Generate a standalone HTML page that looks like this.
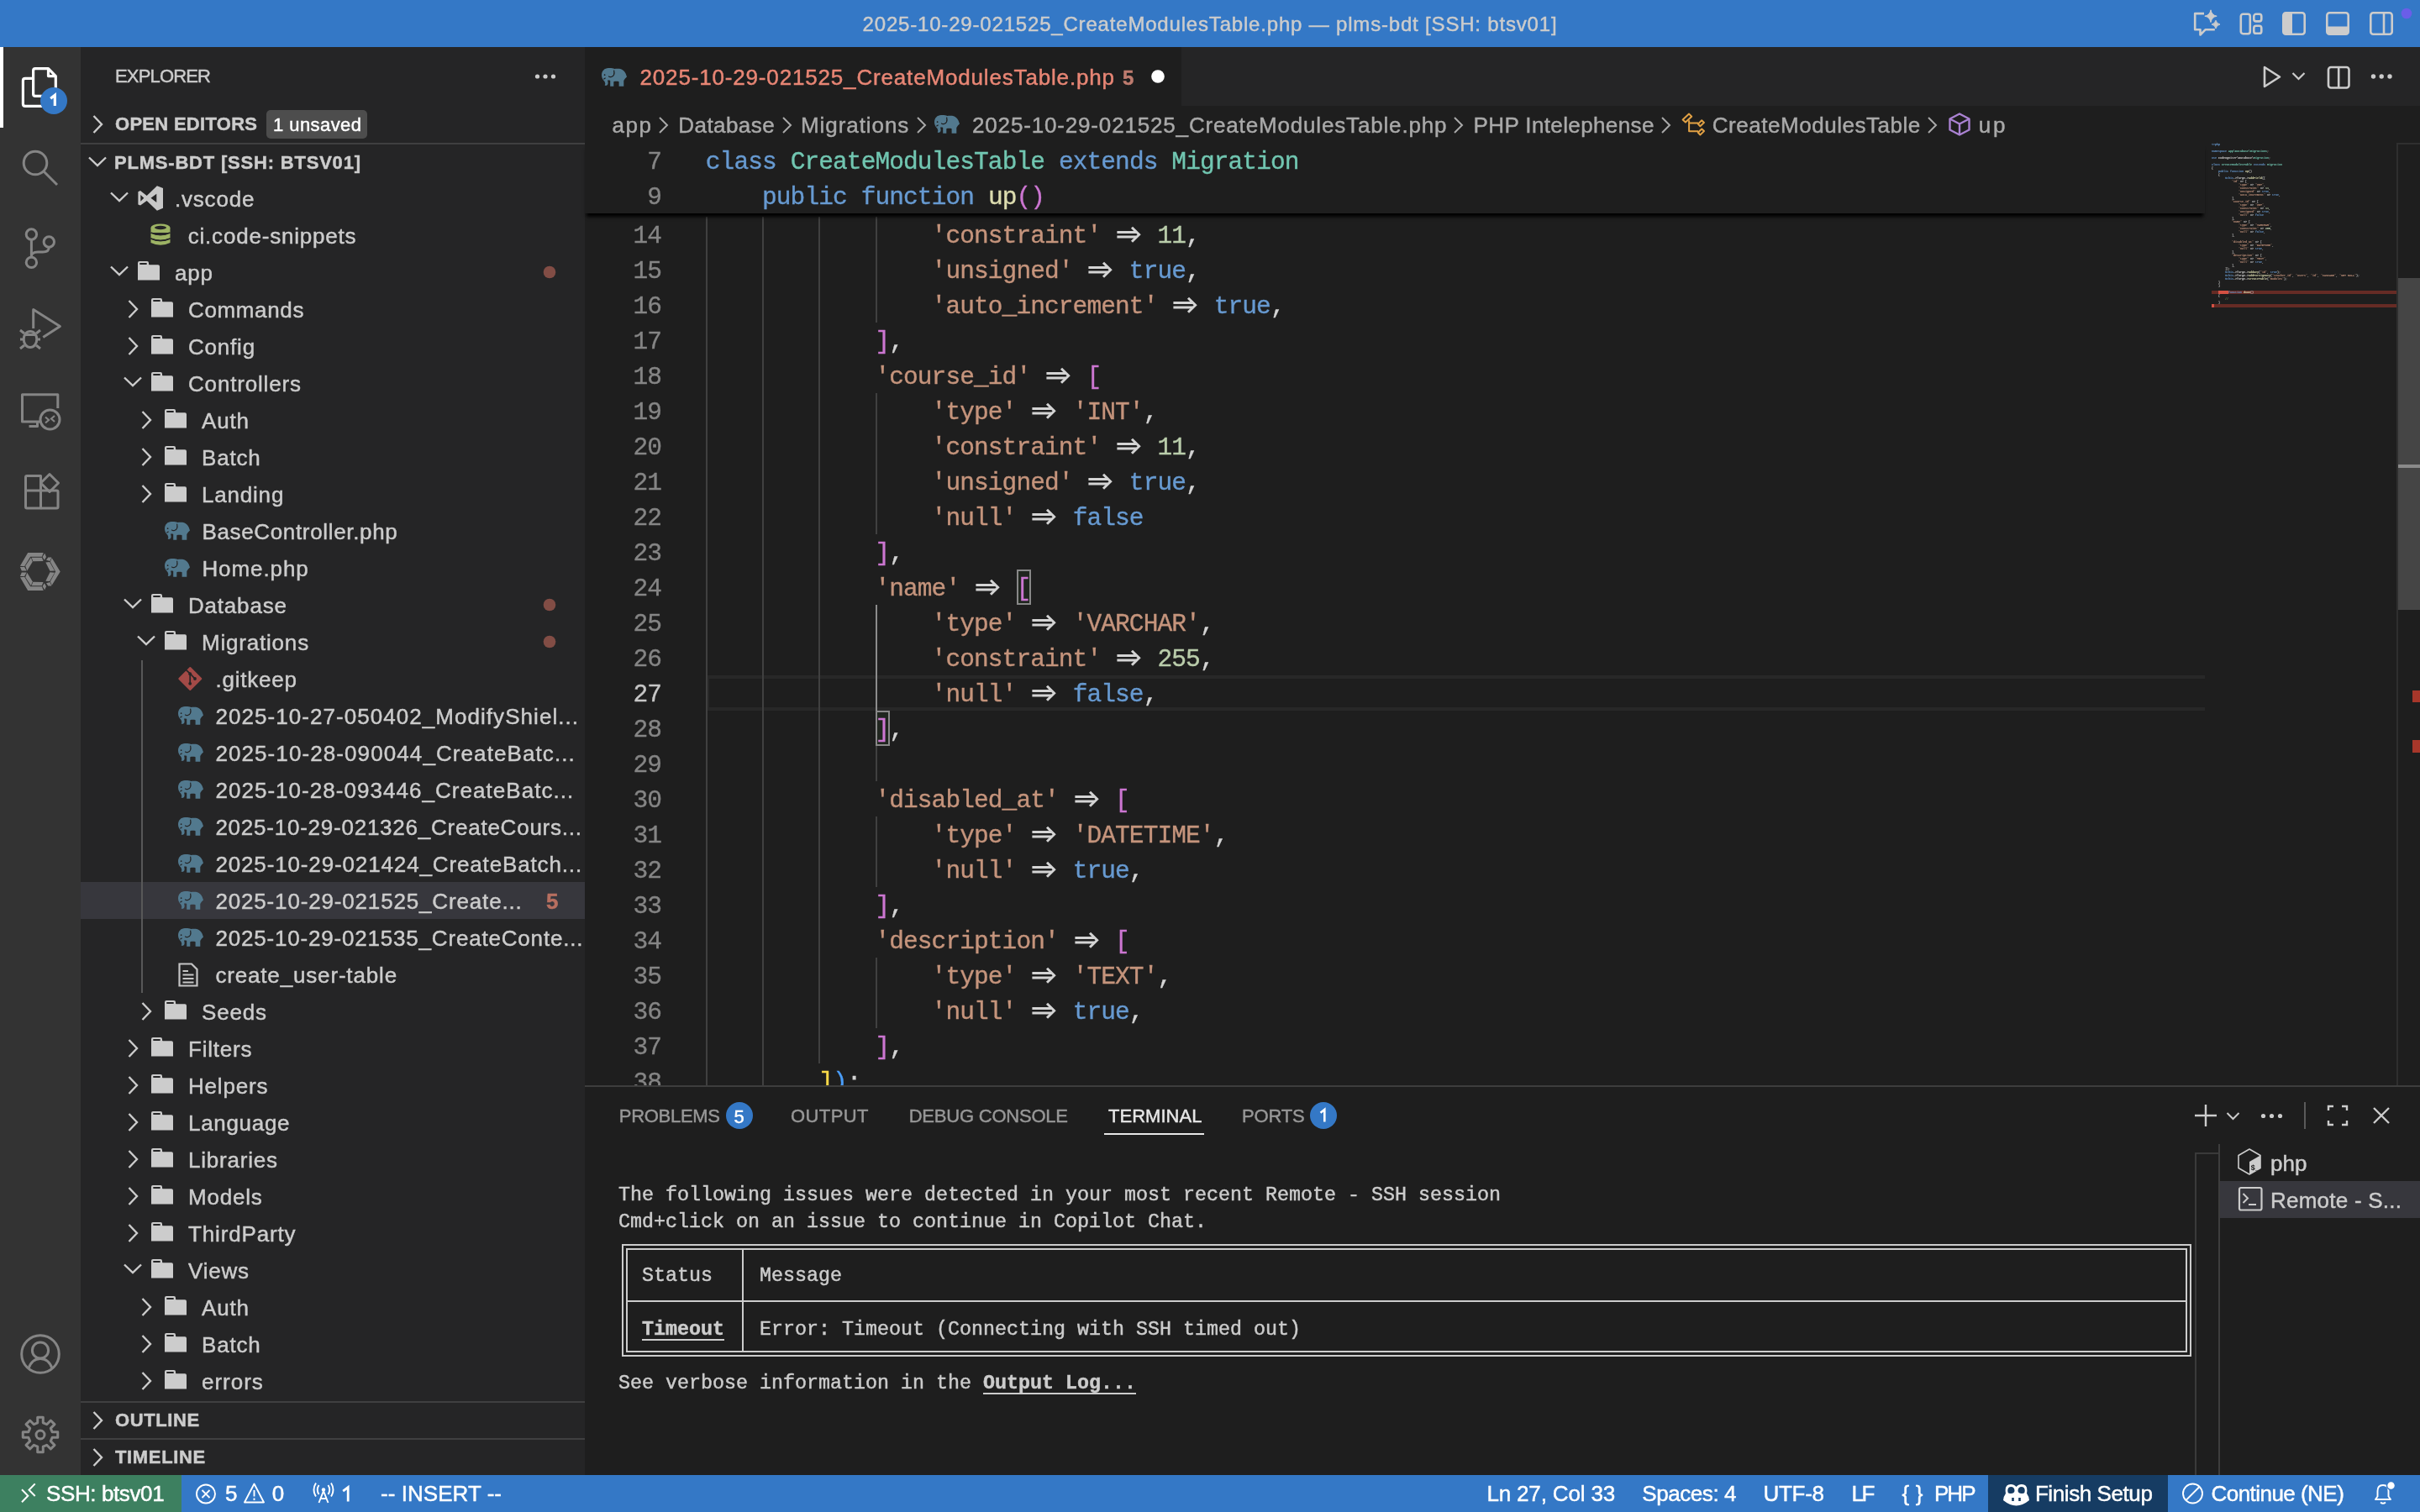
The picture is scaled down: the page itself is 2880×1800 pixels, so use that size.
<!DOCTYPE html><html><head><meta charset="utf-8"><style>html,body{margin:0;padding:0;width:2880px;height:1800px;overflow:hidden;background:#1e1e1e}svg{overflow:visible}</style></head><body><div style="position:absolute;left:0;top:0;width:2880px;height:1800px;overflow:hidden;will-change:transform"><div style="position:absolute;left:0px;top:0px;width:2880px;height:56px;background:#3478c6;"></div>
<div style="position:absolute;left:0px;top:56px;width:96px;height:1700px;background:#333333;"></div>
<div style="position:absolute;left:96px;top:56px;width:600px;height:1700px;background:#252526;"></div>
<div style="position:absolute;left:696px;top:56px;width:2184px;height:1700px;background:#1e1e1e;"></div>
<div style="position:absolute;left:1406px;top:56px;width:1474px;height:70px;background:#252526;"></div>
<div style="position:absolute;left:0px;top:1756px;width:2880px;height:44px;background:#3478c6;"></div>
<div id="t1" style="position:absolute;left:1440px;top:16.60px;font-family:'Liberation Sans', sans-serif;font-size:24px;line-height:1;font-weight:400;color:#cccccc;white-space:pre;-webkit-text-stroke:0.45px #cccccc;letter-spacing:0.816px;transform:translateX(-50%);">2025-10-29-021525_CreateModulesTable.php — plms-bdt [SSH: btsv01]</div>
<svg style="position:absolute;left:2608px;top:8px;" width="40" height="40" viewBox="0 0 40 40">
<path d="M15 8.1 H4.2 V27.3 H10.5 V33.5 L16.5 27.3 H27.8" fill="none" stroke="#cccccc" stroke-width="2.6" stroke-linejoin="round"/>
<path d="M23 3.8 Q24.2 10.2 30.2 11.2 Q24.2 12.2 23 18.6 Q21.8 12.2 15.8 11.2 Q21.8 10.2 23 3.8Z" fill="#cccccc" stroke="#cccccc" stroke-width="1"/>
<path d="M29 16.2 Q29.8 20.2 34 21 Q29.8 21.8 29 26 Q28.2 21.8 24 21 Q28.2 20.2 29 16.2Z" fill="#cccccc" stroke="#cccccc" stroke-width="1"/>
</svg>
<svg style="position:absolute;left:2664px;top:14px;" width="32" height="30" viewBox="0 0 32 30">
<rect x="2.8" y="2.8" width="11" height="23.4" rx="2.6" fill="none" stroke="#cccccc" stroke-width="2.6" stroke-linejoin="round"/>
<rect x="18.3" y="2.8" width="9" height="8.6" rx="2.6" fill="none" stroke="#cccccc" stroke-width="2.6" stroke-linejoin="round"/>
<rect x="18.3" y="16.8" width="9" height="9" rx="2.6" fill="none" stroke="#cccccc" stroke-width="2.6" stroke-linejoin="round"/>
</svg>
<svg style="position:absolute;left:2714px;top:12px;" width="32" height="32" viewBox="0 0 32 32">
<rect x="3.3" y="3.3" width="25.4" height="25.4" rx="3" fill="none" stroke="#cccccc" stroke-width="2.6" stroke-linejoin="round"/>
<path d="M3.3 6 Q3.3 3.3 6 3.3 H14 V28.7 H6 Q3.3 28.7 3.3 26 Z" fill="#cccccc"/>
</svg>
<svg style="position:absolute;left:2766px;top:12px;" width="32" height="32" viewBox="0 0 32 32">
<rect x="3.3" y="3.3" width="25.4" height="25.4" rx="3" fill="none" stroke="#cccccc" stroke-width="2.6" stroke-linejoin="round"/>
<path d="M3.3 19.5 H28.7 V26 Q28.7 28.7 26 28.7 H6 Q3.3 28.7 3.3 26 Z" fill="#cccccc"/>
</svg>
<svg style="position:absolute;left:2818px;top:12px;" width="32" height="32" viewBox="0 0 32 32">
<rect x="3.3" y="3.3" width="25.4" height="25.4" rx="3" fill="none" stroke="#cccccc" stroke-width="2.6" stroke-linejoin="round"/>
<path d="M19 3.3 V28.7" fill="none" stroke="#cccccc" stroke-width="2.6" stroke-linejoin="round"/>
</svg>
<svg style="position:absolute;left:2856px;top:8px;" width="16" height="16" viewBox="0 0 16 16"><circle cx="8" cy="8" r="6.3" fill="#6a5ee8"/></svg>
<div style="position:absolute;left:0px;top:56px;width:4px;height:96px;background:#ffffff;"></div>
<svg style="position:absolute;left:20px;top:76px;" width="56" height="64" viewBox="0 0 56 64">
<path d="M30 38.4 H22 Q19.6 38.4 19.6 36 V8 Q19.6 5.6 22 5.6 H37.5 L46.3 14.6 V40" fill="none" stroke="#ffffff" stroke-width="3.2" stroke-linejoin="round"/>
<path d="M37.5 5.6 V14.6 H46.3" fill="none" stroke="#ffffff" stroke-width="3.2" stroke-linejoin="round"/>
<path d="M19.6 17.4 H10 Q7.4 17.4 7.4 20 V47.7 Q7.4 50.3 10 50.3 H30" fill="none" stroke="#ffffff" stroke-width="3.2" stroke-linejoin="round"/>
<circle cx="44" cy="44" r="16" fill="#3478c6"/>
<path d="M40.2 41.2 L45.3 37.2 V50" fill="none" stroke="#ffffff" stroke-width="3.2" stroke-linejoin="miter"/>
</svg>
<svg style="position:absolute;left:20px;top:172px;" width="56" height="56" viewBox="0 0 56 56">
<circle cx="22" cy="22" r="13.8" fill="none" stroke="#858585" stroke-width="3" stroke-linecap="butt" stroke-linejoin="round"/>
<path d="M32 32 L48 48" fill="none" stroke="#858585" stroke-width="3" stroke-linecap="butt" stroke-linejoin="round"/>
</svg>
<svg style="position:absolute;left:20px;top:264px;" width="56" height="64" viewBox="0 0 56 64">
<circle cx="17.4" cy="15" r="6.2" fill="none" stroke="#858585" stroke-width="3" stroke-linecap="butt" stroke-linejoin="round"/>
<circle cx="17.4" cy="48.4" r="6.2" fill="none" stroke="#858585" stroke-width="3" stroke-linecap="butt" stroke-linejoin="round"/>
<circle cx="38.3" cy="24" r="6.2" fill="none" stroke="#858585" stroke-width="3" stroke-linecap="butt" stroke-linejoin="round"/>
<path d="M17.4 21.2 V42.2" fill="none" stroke="#858585" stroke-width="3" stroke-linecap="butt" stroke-linejoin="round"/>
<path d="M38.3 30.2 Q38.3 36 31 36 H25 Q17.4 36 17.4 41" fill="none" stroke="#858585" stroke-width="3" stroke-linecap="butt" stroke-linejoin="round"/>
</svg>
<svg style="position:absolute;left:16px;top:360px;" width="64" height="64" viewBox="0 0 64 64">
<path d="M23.7 31 V8.5 L55.4 28.4 L35.3 41.5" fill="none" stroke="#858585" stroke-width="3" stroke-linecap="butt" stroke-linejoin="round"/>
<ellipse cx="20" cy="44" rx="7.8" ry="9.5" fill="none" stroke="#858585" stroke-width="3" stroke-linecap="butt" stroke-linejoin="round"/>
<path d="M13 38.5 H27" fill="none" stroke="#858585" stroke-width="3" stroke-linecap="butt" stroke-linejoin="round"/>
<path d="M8 33 L13 37 M32 33 L27 37 M8 44 H12.2 M27.8 44 H32 M8 55 L13 51 M32 55 L27 51" fill="none" stroke="#858585" stroke-width="3" stroke-linecap="butt" stroke-linejoin="round"/>
</svg>
<svg style="position:absolute;left:16px;top:456px;" width="64" height="64" viewBox="0 0 64 64">
<path d="M31 46 H10.5 V13.7 H52.8 V30" fill="none" stroke="#858585" stroke-width="3" stroke-linecap="butt" stroke-linejoin="round"/>
<path d="M18.5 51.5 H28.5 V46" fill="none" stroke="#858585" stroke-width="3" stroke-linecap="butt" stroke-linejoin="round"/>
<circle cx="43.5" cy="43.5" r="11.5" fill="none" stroke="#858585" stroke-width="3" stroke-linecap="butt" stroke-linejoin="round"/>
<path d="M38 40.5 L42 44 L38 47.5 M49 39 L45 42.5 L49 46" fill="none" stroke="#858585" stroke-width="2.2"/>
</svg>
<svg style="position:absolute;left:20px;top:556px;" width="60" height="60" viewBox="0 0 60 60">
<path d="M10.5 28 H28.5 V10.5 H12 Q10.5 10.5 10.5 12 Z" fill="none" stroke="#858585" stroke-width="3" stroke-linecap="butt" stroke-linejoin="round"/>
<path d="M10.5 28 V47.5 Q10.5 49 12 49 H28.5 V28" fill="none" stroke="#858585" stroke-width="3" stroke-linecap="butt" stroke-linejoin="round"/>
<path d="M28.5 28 H47.5 Q49 28 49 29.5 V47.5 Q49 49 47.5 49 H28.5" fill="none" stroke="#858585" stroke-width="3" stroke-linecap="butt" stroke-linejoin="round"/>
<path d="M28.5 19 L39 8.5 L49.5 19 L39 29.5 Z" fill="none" stroke="#858585" stroke-width="3" stroke-linecap="butt" stroke-linejoin="round"/>
</svg>
<svg style="position:absolute;left:18px;top:652px;" width="60" height="56" viewBox="0 0 1620 1512"><g fill="#858585"><path d="M160 590 L410 160 L910 160 L860 290 L490 290 L300 600Z"/><path d="M160 950 L410 1380 L910 1380 L860 1250 L490 1250 L300 940Z"/><path d="M530 320 L860 320 L905 430 L575 440Z"/><path d="M530 1220 L860 1220 L905 1110 L575 1100Z"/><path d="M330 590 L510 320 L560 450 L385 740Z"/><path d="M330 950 L510 1220 L560 1090 L385 800Z"/><path d="M160 620 L300 620 L370 745 L210 745Z"/><path d="M160 920 L300 920 L370 795 L210 795Z"/><path d="M880 300 L950 180 L1000 300 L940 400Z"/><path d="M880 1240 L950 1360 L1000 1240 L940 1140Z"/><path d="M1000 400 L1060 310 L1170 310 L1120 430Z"/><path d="M1000 1140 L1060 1230 L1170 1230 L1120 1110Z"/><path d="M980 470 L1110 460 L1270 740 L1120 750Z"/><path d="M980 1070 L1110 1080 L1270 800 L1120 790Z"/><path d="M1180 330 L1450 770 L1180 1210 L1130 1090 L1300 770 L1130 450Z"/></g></svg>
<svg style="position:absolute;left:16px;top:1580px;" width="64" height="64" viewBox="0 0 64 64">
<circle cx="32" cy="32" r="22.3" fill="none" stroke="#858585" stroke-width="3" stroke-linecap="butt" stroke-linejoin="round"/>
<circle cx="32" cy="27.5" r="9.6" fill="none" stroke="#858585" stroke-width="3" stroke-linecap="butt" stroke-linejoin="round"/>
<path d="M18 49 Q22 37.5 32 37.5 Q42 37.5 46 49" fill="none" stroke="#858585" stroke-width="3" stroke-linecap="butt" stroke-linejoin="round"/>
</svg>
<svg style="position:absolute;left:16px;top:1676px;" width="64" height="64" viewBox="0 0 64 64">
<path d="M28.74 17.87 L28.71 11.26 L35.29 11.26 L35.26 17.87 L39.68 19.70 L44.34 15.01 L48.99 19.66 L44.30 24.32 L46.13 28.74 L52.74 28.71 L52.74 35.29 L46.13 35.26 L44.30 39.68 L48.99 44.34 L44.34 48.99 L39.68 44.30 L35.26 46.13 L35.29 52.74 L28.71 52.74 L28.74 46.13 L24.32 44.30 L19.66 48.99 L15.01 44.34 L19.70 39.68 L17.87 35.26 L11.26 35.29 L11.26 28.71 L17.87 28.74 L19.70 24.32 L15.01 19.66 L19.66 15.01 L24.32 19.70Z" fill="none" stroke="#858585" stroke-width="3" stroke-linecap="butt" stroke-linejoin="round"/>
<circle cx="32" cy="32" r="5" fill="none" stroke="#858585" stroke-width="3" stroke-linecap="butt" stroke-linejoin="round"/>
</svg>
<div id="t2" style="position:absolute;left:137px;top:80.30px;font-family:'Liberation Sans', sans-serif;font-size:22px;line-height:1;font-weight:400;color:#cccccc;white-space:pre;-webkit-text-stroke:0.45px #cccccc;letter-spacing:-0.833px;">EXPLORER</div>
<svg style="position:absolute;left:632px;top:84px;" width="32" height="16" viewBox="0 0 32 16"><circle cx="7.5" cy="7" r="2.6" fill="#cccccc"/><circle cx="17" cy="7" r="2.6" fill="#cccccc"/><circle cx="26.5" cy="7" r="2.6" fill="#cccccc"/></svg>
<svg style="position:absolute;left:109px;top:136px;" width="16" height="24" viewBox="0 0 16 24"><path d="M2.5 2 L12 12 L2.5 22" fill="none" stroke="#cccccc" stroke-width="2.4"/></svg>
<div id="t3" style="position:absolute;left:137px;top:137.30px;font-family:'Liberation Sans', sans-serif;font-size:22px;line-height:1;font-weight:700;color:#cccccc;white-space:pre;-webkit-text-stroke:0.45px #cccccc;letter-spacing:0.286px;">OPEN EDITORS</div>
<div style="position:absolute;left:317px;top:131px;width:120px;height:34px;background:#4d4d4d;border-radius:5px;"></div>
<div id="t4" style="position:absolute;left:325px;top:138.30px;font-family:'Liberation Sans', sans-serif;font-size:22px;line-height:1;font-weight:400;color:#ffffff;white-space:pre;-webkit-text-stroke:0.45px #ffffff;letter-spacing:0.434px;">1 unsaved</div>
<div style="position:absolute;left:96px;top:170px;width:600px;height:2px;background:#3f3f40;"></div>
<svg style="position:absolute;left:104px;top:185px;" width="24" height="16" viewBox="0 0 24 16"><path d="M2 2.5 L12 12 L22 2.5" fill="none" stroke="#cccccc" stroke-width="2.4"/></svg>
<div id="t5" style="position:absolute;left:136px;top:182.80px;font-family:'Liberation Sans', sans-serif;font-size:22px;line-height:1;font-weight:700;color:#cccccc;white-space:pre;-webkit-text-stroke:0.45px #cccccc;letter-spacing:0.798px;">PLMS-BDT [SSH: BTSV01]</div>
<div style="position:absolute;left:96px;top:1050px;width:600px;height:44px;background:#37373d;"></div>
<div style="position:absolute;left:168px;top:786px;width:2px;height:396px;background:#585858;"></div>
<svg style="position:absolute;left:129.7px;top:227px;" width="24" height="16" viewBox="0 0 24 16"><path d="M2 2.5 L12 12 L22 2.5" fill="none" stroke="#cccccc" stroke-width="2.4"/></svg>
<svg style="position:absolute;left:163.7px;top:221px;" width="31" height="31" viewBox="0 0 31 31"><path d="M0.4 7.2 L3 6.1 L10.7 11.9 L22.9 0.3 L30 2.9 V26.7 L22.9 29.7 L10.7 18 L3 23.6 L0.4 22.5 Z M3.3 10.9 L7.3 14.8 L3.3 18.8 Z M22.3 9.8 L15.5 14.8 L22.3 20.1 Z" fill="#c8c8c8" fill-rule="evenodd"/></svg>
<div id="t6" style="position:absolute;left:208px;top:223.90px;font-family:'Liberation Sans', sans-serif;font-size:26px;line-height:1;font-weight:400;color:#cccccc;white-space:pre;-webkit-text-stroke:0.45px #cccccc;letter-spacing:0.8px;">.vscode</div>
<svg style="position:absolute;left:179.2px;top:266px;" width="26" height="28" viewBox="0 0 26 28"><g fill="#9db364">
<ellipse cx="12" cy="5" rx="11.5" ry="4.6"/><rect x="0.5" y="5" width="23" height="6"/>
<path d="M0.5 11.5 Q12 17 23.5 11.5 V17.5 Q12 22 0.5 17.5Z"/>
<path d="M0.5 18.5 Q12 24 23.5 18.5 V23 Q12 28.5 0.5 23Z"/>
</g><ellipse cx="12" cy="5" rx="7" ry="2.2" fill="#252526"/>
<path d="M0.5 11 Q12 16 23.5 11" fill="none" stroke="#252526" stroke-width="1.6"/>
<path d="M0.5 18 Q12 23 23.5 18" fill="none" stroke="#252526" stroke-width="1.6"/></svg>
<div id="t7" style="position:absolute;left:223.7px;top:267.90px;font-family:'Liberation Sans', sans-serif;font-size:26px;line-height:1;font-weight:400;color:#cccccc;white-space:pre;-webkit-text-stroke:0.45px #cccccc;letter-spacing:0.8px;">ci.code-snippets</div>
<svg style="position:absolute;left:129.7px;top:315px;" width="24" height="16" viewBox="0 0 24 16"><path d="M2 2.5 L12 12 L22 2.5" fill="none" stroke="#cccccc" stroke-width="2.4"/></svg>
<svg style="position:absolute;left:164.0px;top:310.6px;" width="27" height="23" viewBox="0 0 27 23"><path d="M0 2 Q0 0 2 0 H11 Q13 0 13 2 V3.4 Q13.4 4.3 14.6 4.3 H24 Q26 4.3 26 6.3 V22.4 H0 Z" fill="#cccccc"/><rect x="2.1" y="2.1" width="8.8" height="1.9" rx="0.9" fill="#252526"/></svg>
<div id="t8" style="position:absolute;left:208px;top:311.90px;font-family:'Liberation Sans', sans-serif;font-size:26px;line-height:1;font-weight:400;color:#cccccc;white-space:pre;-webkit-text-stroke:0.45px #cccccc;letter-spacing:0.8px;">app</div>
<svg style="position:absolute;left:646px;top:316px;" width="16" height="16" viewBox="0 0 16 16"><circle cx="8" cy="8" r="7.3" fill="#824d45"/></svg>
<svg style="position:absolute;left:150.7px;top:356px;" width="16" height="24" viewBox="0 0 16 24"><path d="M2.5 2 L12 12 L2.5 22" fill="none" stroke="#cccccc" stroke-width="2.4"/></svg>
<svg style="position:absolute;left:180.0px;top:354.6px;" width="27" height="23" viewBox="0 0 27 23"><path d="M0 2 Q0 0 2 0 H11 Q13 0 13 2 V3.4 Q13.4 4.3 14.6 4.3 H24 Q26 4.3 26 6.3 V22.4 H0 Z" fill="#cccccc"/><rect x="2.1" y="2.1" width="8.8" height="1.9" rx="0.9" fill="#252526"/></svg>
<div id="t9" style="position:absolute;left:224px;top:355.90px;font-family:'Liberation Sans', sans-serif;font-size:26px;line-height:1;font-weight:400;color:#cccccc;white-space:pre;-webkit-text-stroke:0.45px #cccccc;letter-spacing:0.638px;">Commands</div>
<svg style="position:absolute;left:150.7px;top:400px;" width="16" height="24" viewBox="0 0 16 24"><path d="M2.5 2 L12 12 L2.5 22" fill="none" stroke="#cccccc" stroke-width="2.4"/></svg>
<svg style="position:absolute;left:180.0px;top:398.6px;" width="27" height="23" viewBox="0 0 27 23"><path d="M0 2 Q0 0 2 0 H11 Q13 0 13 2 V3.4 Q13.4 4.3 14.6 4.3 H24 Q26 4.3 26 6.3 V22.4 H0 Z" fill="#cccccc"/><rect x="2.1" y="2.1" width="8.8" height="1.9" rx="0.9" fill="#252526"/></svg>
<div id="t10" style="position:absolute;left:224px;top:399.90px;font-family:'Liberation Sans', sans-serif;font-size:26px;line-height:1;font-weight:400;color:#cccccc;white-space:pre;-webkit-text-stroke:0.45px #cccccc;letter-spacing:0.8px;">Config</div>
<svg style="position:absolute;left:145.7px;top:447px;" width="24" height="16" viewBox="0 0 24 16"><path d="M2 2.5 L12 12 L22 2.5" fill="none" stroke="#cccccc" stroke-width="2.4"/></svg>
<svg style="position:absolute;left:180.0px;top:442.6px;" width="27" height="23" viewBox="0 0 27 23"><path d="M0 2 Q0 0 2 0 H11 Q13 0 13 2 V3.4 Q13.4 4.3 14.6 4.3 H24 Q26 4.3 26 6.3 V22.4 H0 Z" fill="#cccccc"/><rect x="2.1" y="2.1" width="8.8" height="1.9" rx="0.9" fill="#252526"/></svg>
<div id="t11" style="position:absolute;left:224px;top:443.90px;font-family:'Liberation Sans', sans-serif;font-size:26px;line-height:1;font-weight:400;color:#cccccc;white-space:pre;-webkit-text-stroke:0.45px #cccccc;letter-spacing:0.828px;">Controllers</div>
<svg style="position:absolute;left:166.7px;top:488px;" width="16" height="24" viewBox="0 0 16 24"><path d="M2.5 2 L12 12 L2.5 22" fill="none" stroke="#cccccc" stroke-width="2.4"/></svg>
<svg style="position:absolute;left:196.0px;top:486.6px;" width="27" height="23" viewBox="0 0 27 23"><path d="M0 2 Q0 0 2 0 H11 Q13 0 13 2 V3.4 Q13.4 4.3 14.6 4.3 H24 Q26 4.3 26 6.3 V22.4 H0 Z" fill="#cccccc"/><rect x="2.1" y="2.1" width="8.8" height="1.9" rx="0.9" fill="#252526"/></svg>
<div id="t12" style="position:absolute;left:240px;top:487.90px;font-family:'Liberation Sans', sans-serif;font-size:26px;line-height:1;font-weight:400;color:#cccccc;white-space:pre;-webkit-text-stroke:0.45px #cccccc;letter-spacing:0.8px;">Auth</div>
<svg style="position:absolute;left:166.7px;top:532px;" width="16" height="24" viewBox="0 0 16 24"><path d="M2.5 2 L12 12 L2.5 22" fill="none" stroke="#cccccc" stroke-width="2.4"/></svg>
<svg style="position:absolute;left:196.0px;top:530.6px;" width="27" height="23" viewBox="0 0 27 23"><path d="M0 2 Q0 0 2 0 H11 Q13 0 13 2 V3.4 Q13.4 4.3 14.6 4.3 H24 Q26 4.3 26 6.3 V22.4 H0 Z" fill="#cccccc"/><rect x="2.1" y="2.1" width="8.8" height="1.9" rx="0.9" fill="#252526"/></svg>
<div id="t13" style="position:absolute;left:240px;top:531.90px;font-family:'Liberation Sans', sans-serif;font-size:26px;line-height:1;font-weight:400;color:#cccccc;white-space:pre;-webkit-text-stroke:0.45px #cccccc;letter-spacing:0.8px;">Batch</div>
<svg style="position:absolute;left:166.7px;top:576px;" width="16" height="24" viewBox="0 0 16 24"><path d="M2.5 2 L12 12 L2.5 22" fill="none" stroke="#cccccc" stroke-width="2.4"/></svg>
<svg style="position:absolute;left:196.0px;top:574.6px;" width="27" height="23" viewBox="0 0 27 23"><path d="M0 2 Q0 0 2 0 H11 Q13 0 13 2 V3.4 Q13.4 4.3 14.6 4.3 H24 Q26 4.3 26 6.3 V22.4 H0 Z" fill="#cccccc"/><rect x="2.1" y="2.1" width="8.8" height="1.9" rx="0.9" fill="#252526"/></svg>
<div id="t14" style="position:absolute;left:240px;top:575.90px;font-family:'Liberation Sans', sans-serif;font-size:26px;line-height:1;font-weight:400;color:#cccccc;white-space:pre;-webkit-text-stroke:0.45px #cccccc;letter-spacing:0.8px;">Landing</div>
<svg style="position:absolute;left:195.7px;top:621px;" width="30" height="22" viewBox="0 0 30 22"><g transform="scale(1.0000,1.0000)">
<path d="M8 0 C3.5 0 0 3.5 0 8.5 C0 11.5 1.5 14.5 3.5 16 L4.3 18.6 C4.3 19.4 4.0 19.8 3.6 20.2 C4.5 21.4 6.3 21.0 7.1 19.8 C7.9 18.5 7.7 16.5 7 14.8 C8 14.3 9.2 14.4 10.2 14.9 L10.2 21.7 L14.3 21.7 L14.3 16.2 C16 15.6 19 15.6 20.6 16.2 L20.6 21.7 L26.3 21.7 L26.3 15 C27.3 13.2 28.5 11.8 30 10.6 C29.2 7 27.5 3 23 1.2 C20.5 0.4 17.5 0.6 15.2 1 C13.5 0 10.5 -0.2 8 0 Z" fill="#52798e"/>
<path d="M14.6 2.6 C15.4 6 14.6 9.6 11.6 10.5 C10.1 11 8.9 10.5 8.3 9.6" fill="none" stroke="#252526" stroke-width="1.2"/>
<circle cx="3.6" cy="8.2" r="0.85" fill="#252526"/>
<path d="M2.4 13.2 L4.6 11.8" stroke="#252526" stroke-width="1.2"/>
</g></svg>
<div id="t15" style="position:absolute;left:240.4px;top:619.90px;font-family:'Liberation Sans', sans-serif;font-size:26px;line-height:1;font-weight:400;color:#cccccc;white-space:pre;-webkit-text-stroke:0.45px #cccccc;letter-spacing:0.662px;">BaseController.php</div>
<svg style="position:absolute;left:195.7px;top:665px;" width="30" height="22" viewBox="0 0 30 22"><g transform="scale(1.0000,1.0000)">
<path d="M8 0 C3.5 0 0 3.5 0 8.5 C0 11.5 1.5 14.5 3.5 16 L4.3 18.6 C4.3 19.4 4.0 19.8 3.6 20.2 C4.5 21.4 6.3 21.0 7.1 19.8 C7.9 18.5 7.7 16.5 7 14.8 C8 14.3 9.2 14.4 10.2 14.9 L10.2 21.7 L14.3 21.7 L14.3 16.2 C16 15.6 19 15.6 20.6 16.2 L20.6 21.7 L26.3 21.7 L26.3 15 C27.3 13.2 28.5 11.8 30 10.6 C29.2 7 27.5 3 23 1.2 C20.5 0.4 17.5 0.6 15.2 1 C13.5 0 10.5 -0.2 8 0 Z" fill="#52798e"/>
<path d="M14.6 2.6 C15.4 6 14.6 9.6 11.6 10.5 C10.1 11 8.9 10.5 8.3 9.6" fill="none" stroke="#252526" stroke-width="1.2"/>
<circle cx="3.6" cy="8.2" r="0.85" fill="#252526"/>
<path d="M2.4 13.2 L4.6 11.8" stroke="#252526" stroke-width="1.2"/>
</g></svg>
<div id="t16" style="position:absolute;left:240.4px;top:663.90px;font-family:'Liberation Sans', sans-serif;font-size:26px;line-height:1;font-weight:400;color:#cccccc;white-space:pre;-webkit-text-stroke:0.45px #cccccc;letter-spacing:0.919px;">Home.php</div>
<svg style="position:absolute;left:145.7px;top:711px;" width="24" height="16" viewBox="0 0 24 16"><path d="M2 2.5 L12 12 L22 2.5" fill="none" stroke="#cccccc" stroke-width="2.4"/></svg>
<svg style="position:absolute;left:180.0px;top:706.6px;" width="27" height="23" viewBox="0 0 27 23"><path d="M0 2 Q0 0 2 0 H11 Q13 0 13 2 V3.4 Q13.4 4.3 14.6 4.3 H24 Q26 4.3 26 6.3 V22.4 H0 Z" fill="#cccccc"/><rect x="2.1" y="2.1" width="8.8" height="1.9" rx="0.9" fill="#252526"/></svg>
<div id="t17" style="position:absolute;left:224px;top:707.90px;font-family:'Liberation Sans', sans-serif;font-size:26px;line-height:1;font-weight:400;color:#cccccc;white-space:pre;-webkit-text-stroke:0.45px #cccccc;letter-spacing:0.8px;">Database</div>
<svg style="position:absolute;left:646px;top:712px;" width="16" height="16" viewBox="0 0 16 16"><circle cx="8" cy="8" r="7.3" fill="#824d45"/></svg>
<svg style="position:absolute;left:161.7px;top:755px;" width="24" height="16" viewBox="0 0 24 16"><path d="M2 2.5 L12 12 L22 2.5" fill="none" stroke="#cccccc" stroke-width="2.4"/></svg>
<svg style="position:absolute;left:196.0px;top:750.6px;" width="27" height="23" viewBox="0 0 27 23"><path d="M0 2 Q0 0 2 0 H11 Q13 0 13 2 V3.4 Q13.4 4.3 14.6 4.3 H24 Q26 4.3 26 6.3 V22.4 H0 Z" fill="#cccccc"/><rect x="2.1" y="2.1" width="8.8" height="1.9" rx="0.9" fill="#252526"/></svg>
<div id="t18" style="position:absolute;left:240px;top:751.90px;font-family:'Liberation Sans', sans-serif;font-size:26px;line-height:1;font-weight:400;color:#cccccc;white-space:pre;-webkit-text-stroke:0.45px #cccccc;letter-spacing:0.8px;">Migrations</div>
<svg style="position:absolute;left:646px;top:756px;" width="16" height="16" viewBox="0 0 16 16"><circle cx="8" cy="8" r="7.3" fill="#824d45"/></svg>
<svg style="position:absolute;left:209.7px;top:792px;" width="34" height="32" viewBox="0 0 34 32"><path d="M16.3 3 L29.3 16 L16.3 29 L3.3 16 Z" fill="#a34a47" stroke="#a34a47" stroke-width="2" stroke-linejoin="round"/>
<path d="M11 5.2 L16.2 9.9 V21.8 M16.2 9.9 L22 16" fill="none" stroke="#252526" stroke-width="1.7"/>
<circle cx="16.2" cy="10.2" r="1.9" fill="#252526"/><circle cx="16.2" cy="21.8" r="1.9" fill="#252526"/><circle cx="22" cy="16" r="1.9" fill="#252526"/></svg>
<div id="t19" style="position:absolute;left:256.4px;top:795.90px;font-family:'Liberation Sans', sans-serif;font-size:26px;line-height:1;font-weight:400;color:#cccccc;white-space:pre;-webkit-text-stroke:0.45px #cccccc;letter-spacing:0.8px;">.gitkeep</div>
<svg style="position:absolute;left:211.7px;top:841px;" width="30" height="22" viewBox="0 0 30 22"><g transform="scale(1.0000,1.0000)">
<path d="M8 0 C3.5 0 0 3.5 0 8.5 C0 11.5 1.5 14.5 3.5 16 L4.3 18.6 C4.3 19.4 4.0 19.8 3.6 20.2 C4.5 21.4 6.3 21.0 7.1 19.8 C7.9 18.5 7.7 16.5 7 14.8 C8 14.3 9.2 14.4 10.2 14.9 L10.2 21.7 L14.3 21.7 L14.3 16.2 C16 15.6 19 15.6 20.6 16.2 L20.6 21.7 L26.3 21.7 L26.3 15 C27.3 13.2 28.5 11.8 30 10.6 C29.2 7 27.5 3 23 1.2 C20.5 0.4 17.5 0.6 15.2 1 C13.5 0 10.5 -0.2 8 0 Z" fill="#52798e"/>
<path d="M14.6 2.6 C15.4 6 14.6 9.6 11.6 10.5 C10.1 11 8.9 10.5 8.3 9.6" fill="none" stroke="#252526" stroke-width="1.2"/>
<circle cx="3.6" cy="8.2" r="0.85" fill="#252526"/>
<path d="M2.4 13.2 L4.6 11.8" stroke="#252526" stroke-width="1.2"/>
</g></svg>
<div id="t20" style="position:absolute;left:256.4px;top:839.90px;font-family:'Liberation Sans', sans-serif;font-size:26px;line-height:1;font-weight:400;color:#cccccc;white-space:pre;-webkit-text-stroke:0.45px #cccccc;letter-spacing:1.054px;">2025-10-27-050402_ModifyShiel...</div>
<svg style="position:absolute;left:211.7px;top:885px;" width="30" height="22" viewBox="0 0 30 22"><g transform="scale(1.0000,1.0000)">
<path d="M8 0 C3.5 0 0 3.5 0 8.5 C0 11.5 1.5 14.5 3.5 16 L4.3 18.6 C4.3 19.4 4.0 19.8 3.6 20.2 C4.5 21.4 6.3 21.0 7.1 19.8 C7.9 18.5 7.7 16.5 7 14.8 C8 14.3 9.2 14.4 10.2 14.9 L10.2 21.7 L14.3 21.7 L14.3 16.2 C16 15.6 19 15.6 20.6 16.2 L20.6 21.7 L26.3 21.7 L26.3 15 C27.3 13.2 28.5 11.8 30 10.6 C29.2 7 27.5 3 23 1.2 C20.5 0.4 17.5 0.6 15.2 1 C13.5 0 10.5 -0.2 8 0 Z" fill="#52798e"/>
<path d="M14.6 2.6 C15.4 6 14.6 9.6 11.6 10.5 C10.1 11 8.9 10.5 8.3 9.6" fill="none" stroke="#252526" stroke-width="1.2"/>
<circle cx="3.6" cy="8.2" r="0.85" fill="#252526"/>
<path d="M2.4 13.2 L4.6 11.8" stroke="#252526" stroke-width="1.2"/>
</g></svg>
<div id="t21" style="position:absolute;left:256.4px;top:883.90px;font-family:'Liberation Sans', sans-serif;font-size:26px;line-height:1;font-weight:400;color:#cccccc;white-space:pre;-webkit-text-stroke:0.45px #cccccc;letter-spacing:1.093px;">2025-10-28-090044_CreateBatc...</div>
<svg style="position:absolute;left:211.7px;top:929px;" width="30" height="22" viewBox="0 0 30 22"><g transform="scale(1.0000,1.0000)">
<path d="M8 0 C3.5 0 0 3.5 0 8.5 C0 11.5 1.5 14.5 3.5 16 L4.3 18.6 C4.3 19.4 4.0 19.8 3.6 20.2 C4.5 21.4 6.3 21.0 7.1 19.8 C7.9 18.5 7.7 16.5 7 14.8 C8 14.3 9.2 14.4 10.2 14.9 L10.2 21.7 L14.3 21.7 L14.3 16.2 C16 15.6 19 15.6 20.6 16.2 L20.6 21.7 L26.3 21.7 L26.3 15 C27.3 13.2 28.5 11.8 30 10.6 C29.2 7 27.5 3 23 1.2 C20.5 0.4 17.5 0.6 15.2 1 C13.5 0 10.5 -0.2 8 0 Z" fill="#52798e"/>
<path d="M14.6 2.6 C15.4 6 14.6 9.6 11.6 10.5 C10.1 11 8.9 10.5 8.3 9.6" fill="none" stroke="#252526" stroke-width="1.2"/>
<circle cx="3.6" cy="8.2" r="0.85" fill="#252526"/>
<path d="M2.4 13.2 L4.6 11.8" stroke="#252526" stroke-width="1.2"/>
</g></svg>
<div id="t22" style="position:absolute;left:256.4px;top:927.90px;font-family:'Liberation Sans', sans-serif;font-size:26px;line-height:1;font-weight:400;color:#cccccc;white-space:pre;-webkit-text-stroke:0.45px #cccccc;letter-spacing:1.040px;">2025-10-28-093446_CreateBatc...</div>
<svg style="position:absolute;left:211.7px;top:973px;" width="30" height="22" viewBox="0 0 30 22"><g transform="scale(1.0000,1.0000)">
<path d="M8 0 C3.5 0 0 3.5 0 8.5 C0 11.5 1.5 14.5 3.5 16 L4.3 18.6 C4.3 19.4 4.0 19.8 3.6 20.2 C4.5 21.4 6.3 21.0 7.1 19.8 C7.9 18.5 7.7 16.5 7 14.8 C8 14.3 9.2 14.4 10.2 14.9 L10.2 21.7 L14.3 21.7 L14.3 16.2 C16 15.6 19 15.6 20.6 16.2 L20.6 21.7 L26.3 21.7 L26.3 15 C27.3 13.2 28.5 11.8 30 10.6 C29.2 7 27.5 3 23 1.2 C20.5 0.4 17.5 0.6 15.2 1 C13.5 0 10.5 -0.2 8 0 Z" fill="#52798e"/>
<path d="M14.6 2.6 C15.4 6 14.6 9.6 11.6 10.5 C10.1 11 8.9 10.5 8.3 9.6" fill="none" stroke="#252526" stroke-width="1.2"/>
<circle cx="3.6" cy="8.2" r="0.85" fill="#252526"/>
<path d="M2.4 13.2 L4.6 11.8" stroke="#252526" stroke-width="1.2"/>
</g></svg>
<div id="t23" style="position:absolute;left:256.4px;top:971.90px;font-family:'Liberation Sans', sans-serif;font-size:26px;line-height:1;font-weight:400;color:#cccccc;white-space:pre;-webkit-text-stroke:0.45px #cccccc;letter-spacing:0.763px;">2025-10-29-021326_CreateCours...</div>
<svg style="position:absolute;left:211.7px;top:1017px;" width="30" height="22" viewBox="0 0 30 22"><g transform="scale(1.0000,1.0000)">
<path d="M8 0 C3.5 0 0 3.5 0 8.5 C0 11.5 1.5 14.5 3.5 16 L4.3 18.6 C4.3 19.4 4.0 19.8 3.6 20.2 C4.5 21.4 6.3 21.0 7.1 19.8 C7.9 18.5 7.7 16.5 7 14.8 C8 14.3 9.2 14.4 10.2 14.9 L10.2 21.7 L14.3 21.7 L14.3 16.2 C16 15.6 19 15.6 20.6 16.2 L20.6 21.7 L26.3 21.7 L26.3 15 C27.3 13.2 28.5 11.8 30 10.6 C29.2 7 27.5 3 23 1.2 C20.5 0.4 17.5 0.6 15.2 1 C13.5 0 10.5 -0.2 8 0 Z" fill="#52798e"/>
<path d="M14.6 2.6 C15.4 6 14.6 9.6 11.6 10.5 C10.1 11 8.9 10.5 8.3 9.6" fill="none" stroke="#252526" stroke-width="1.2"/>
<circle cx="3.6" cy="8.2" r="0.85" fill="#252526"/>
<path d="M2.4 13.2 L4.6 11.8" stroke="#252526" stroke-width="1.2"/>
</g></svg>
<div id="t24" style="position:absolute;left:256.4px;top:1015.90px;font-family:'Liberation Sans', sans-serif;font-size:26px;line-height:1;font-weight:400;color:#cccccc;white-space:pre;-webkit-text-stroke:0.45px #cccccc;letter-spacing:0.862px;">2025-10-29-021424_CreateBatch...</div>
<svg style="position:absolute;left:211.7px;top:1061px;" width="30" height="22" viewBox="0 0 30 22"><g transform="scale(1.0000,1.0000)">
<path d="M8 0 C3.5 0 0 3.5 0 8.5 C0 11.5 1.5 14.5 3.5 16 L4.3 18.6 C4.3 19.4 4.0 19.8 3.6 20.2 C4.5 21.4 6.3 21.0 7.1 19.8 C7.9 18.5 7.7 16.5 7 14.8 C8 14.3 9.2 14.4 10.2 14.9 L10.2 21.7 L14.3 21.7 L14.3 16.2 C16 15.6 19 15.6 20.6 16.2 L20.6 21.7 L26.3 21.7 L26.3 15 C27.3 13.2 28.5 11.8 30 10.6 C29.2 7 27.5 3 23 1.2 C20.5 0.4 17.5 0.6 15.2 1 C13.5 0 10.5 -0.2 8 0 Z" fill="#52798e"/>
<path d="M14.6 2.6 C15.4 6 14.6 9.6 11.6 10.5 C10.1 11 8.9 10.5 8.3 9.6" fill="none" stroke="#252526" stroke-width="1.2"/>
<circle cx="3.6" cy="8.2" r="0.85" fill="#252526"/>
<path d="M2.4 13.2 L4.6 11.8" stroke="#252526" stroke-width="1.2"/>
</g></svg>
<div id="t25" style="position:absolute;left:256.4px;top:1059.90px;font-family:'Liberation Sans', sans-serif;font-size:26px;line-height:1;font-weight:400;color:#cccccc;white-space:pre;-webkit-text-stroke:0.45px #cccccc;letter-spacing:0.839px;">2025-10-29-021525_Create...</div>
<div id="t26" style="position:absolute;left:650px;top:1059.90px;font-family:'Liberation Sans', sans-serif;font-size:26px;line-height:1;font-weight:700;color:#b76f60;white-space:pre;-webkit-text-stroke:0.45px #b76f60;">5</div>
<svg style="position:absolute;left:211.7px;top:1105px;" width="30" height="22" viewBox="0 0 30 22"><g transform="scale(1.0000,1.0000)">
<path d="M8 0 C3.5 0 0 3.5 0 8.5 C0 11.5 1.5 14.5 3.5 16 L4.3 18.6 C4.3 19.4 4.0 19.8 3.6 20.2 C4.5 21.4 6.3 21.0 7.1 19.8 C7.9 18.5 7.7 16.5 7 14.8 C8 14.3 9.2 14.4 10.2 14.9 L10.2 21.7 L14.3 21.7 L14.3 16.2 C16 15.6 19 15.6 20.6 16.2 L20.6 21.7 L26.3 21.7 L26.3 15 C27.3 13.2 28.5 11.8 30 10.6 C29.2 7 27.5 3 23 1.2 C20.5 0.4 17.5 0.6 15.2 1 C13.5 0 10.5 -0.2 8 0 Z" fill="#52798e"/>
<path d="M14.6 2.6 C15.4 6 14.6 9.6 11.6 10.5 C10.1 11 8.9 10.5 8.3 9.6" fill="none" stroke="#252526" stroke-width="1.2"/>
<circle cx="3.6" cy="8.2" r="0.85" fill="#252526"/>
<path d="M2.4 13.2 L4.6 11.8" stroke="#252526" stroke-width="1.2"/>
</g></svg>
<div id="t27" style="position:absolute;left:256.4px;top:1103.90px;font-family:'Liberation Sans', sans-serif;font-size:26px;line-height:1;font-weight:400;color:#cccccc;white-space:pre;-webkit-text-stroke:0.45px #cccccc;letter-spacing:0.811px;">2025-10-29-021535_CreateConte...</div>
<svg style="position:absolute;left:211.7px;top:1146px;" width="26" height="30" viewBox="0 0 26 30"><path d="M1.5 1.5 H16 L22.5 8 V27.5 H1.5 Z" fill="none" stroke="#c5c5c5" stroke-width="2.2"/>
<path d="M5.5 10 H12 M5.5 14.5 H18.5 M5.5 19 H18.5 M5.5 23.5 H18.5" stroke="#c5c5c5" stroke-width="2"/></svg>
<div id="t28" style="position:absolute;left:256.4px;top:1147.90px;font-family:'Liberation Sans', sans-serif;font-size:26px;line-height:1;font-weight:400;color:#cccccc;white-space:pre;-webkit-text-stroke:0.45px #cccccc;letter-spacing:0.835px;">create_user-table</div>
<svg style="position:absolute;left:166.7px;top:1192px;" width="16" height="24" viewBox="0 0 16 24"><path d="M2.5 2 L12 12 L2.5 22" fill="none" stroke="#cccccc" stroke-width="2.4"/></svg>
<svg style="position:absolute;left:196.0px;top:1190.6px;" width="27" height="23" viewBox="0 0 27 23"><path d="M0 2 Q0 0 2 0 H11 Q13 0 13 2 V3.4 Q13.4 4.3 14.6 4.3 H24 Q26 4.3 26 6.3 V22.4 H0 Z" fill="#cccccc"/><rect x="2.1" y="2.1" width="8.8" height="1.9" rx="0.9" fill="#252526"/></svg>
<div id="t29" style="position:absolute;left:240px;top:1191.90px;font-family:'Liberation Sans', sans-serif;font-size:26px;line-height:1;font-weight:400;color:#cccccc;white-space:pre;-webkit-text-stroke:0.45px #cccccc;letter-spacing:0.8px;">Seeds</div>
<svg style="position:absolute;left:150.7px;top:1236px;" width="16" height="24" viewBox="0 0 16 24"><path d="M2.5 2 L12 12 L2.5 22" fill="none" stroke="#cccccc" stroke-width="2.4"/></svg>
<svg style="position:absolute;left:180.0px;top:1234.6px;" width="27" height="23" viewBox="0 0 27 23"><path d="M0 2 Q0 0 2 0 H11 Q13 0 13 2 V3.4 Q13.4 4.3 14.6 4.3 H24 Q26 4.3 26 6.3 V22.4 H0 Z" fill="#cccccc"/><rect x="2.1" y="2.1" width="8.8" height="1.9" rx="0.9" fill="#252526"/></svg>
<div id="t30" style="position:absolute;left:224px;top:1235.90px;font-family:'Liberation Sans', sans-serif;font-size:26px;line-height:1;font-weight:400;color:#cccccc;white-space:pre;-webkit-text-stroke:0.45px #cccccc;letter-spacing:0.8px;">Filters</div>
<svg style="position:absolute;left:150.7px;top:1280px;" width="16" height="24" viewBox="0 0 16 24"><path d="M2.5 2 L12 12 L2.5 22" fill="none" stroke="#cccccc" stroke-width="2.4"/></svg>
<svg style="position:absolute;left:180.0px;top:1278.6px;" width="27" height="23" viewBox="0 0 27 23"><path d="M0 2 Q0 0 2 0 H11 Q13 0 13 2 V3.4 Q13.4 4.3 14.6 4.3 H24 Q26 4.3 26 6.3 V22.4 H0 Z" fill="#cccccc"/><rect x="2.1" y="2.1" width="8.8" height="1.9" rx="0.9" fill="#252526"/></svg>
<div id="t31" style="position:absolute;left:224px;top:1279.90px;font-family:'Liberation Sans', sans-serif;font-size:26px;line-height:1;font-weight:400;color:#cccccc;white-space:pre;-webkit-text-stroke:0.45px #cccccc;letter-spacing:0.8px;">Helpers</div>
<svg style="position:absolute;left:150.7px;top:1324px;" width="16" height="24" viewBox="0 0 16 24"><path d="M2.5 2 L12 12 L2.5 22" fill="none" stroke="#cccccc" stroke-width="2.4"/></svg>
<svg style="position:absolute;left:180.0px;top:1322.6px;" width="27" height="23" viewBox="0 0 27 23"><path d="M0 2 Q0 0 2 0 H11 Q13 0 13 2 V3.4 Q13.4 4.3 14.6 4.3 H24 Q26 4.3 26 6.3 V22.4 H0 Z" fill="#cccccc"/><rect x="2.1" y="2.1" width="8.8" height="1.9" rx="0.9" fill="#252526"/></svg>
<div id="t32" style="position:absolute;left:224px;top:1323.90px;font-family:'Liberation Sans', sans-serif;font-size:26px;line-height:1;font-weight:400;color:#cccccc;white-space:pre;-webkit-text-stroke:0.45px #cccccc;letter-spacing:0.688px;">Language</div>
<svg style="position:absolute;left:150.7px;top:1368px;" width="16" height="24" viewBox="0 0 16 24"><path d="M2.5 2 L12 12 L2.5 22" fill="none" stroke="#cccccc" stroke-width="2.4"/></svg>
<svg style="position:absolute;left:180.0px;top:1366.6px;" width="27" height="23" viewBox="0 0 27 23"><path d="M0 2 Q0 0 2 0 H11 Q13 0 13 2 V3.4 Q13.4 4.3 14.6 4.3 H24 Q26 4.3 26 6.3 V22.4 H0 Z" fill="#cccccc"/><rect x="2.1" y="2.1" width="8.8" height="1.9" rx="0.9" fill="#252526"/></svg>
<div id="t33" style="position:absolute;left:224px;top:1367.90px;font-family:'Liberation Sans', sans-serif;font-size:26px;line-height:1;font-weight:400;color:#cccccc;white-space:pre;-webkit-text-stroke:0.45px #cccccc;letter-spacing:0.8px;">Libraries</div>
<svg style="position:absolute;left:150.7px;top:1412px;" width="16" height="24" viewBox="0 0 16 24"><path d="M2.5 2 L12 12 L2.5 22" fill="none" stroke="#cccccc" stroke-width="2.4"/></svg>
<svg style="position:absolute;left:180.0px;top:1410.6px;" width="27" height="23" viewBox="0 0 27 23"><path d="M0 2 Q0 0 2 0 H11 Q13 0 13 2 V3.4 Q13.4 4.3 14.6 4.3 H24 Q26 4.3 26 6.3 V22.4 H0 Z" fill="#cccccc"/><rect x="2.1" y="2.1" width="8.8" height="1.9" rx="0.9" fill="#252526"/></svg>
<div id="t34" style="position:absolute;left:224px;top:1411.90px;font-family:'Liberation Sans', sans-serif;font-size:26px;line-height:1;font-weight:400;color:#cccccc;white-space:pre;-webkit-text-stroke:0.45px #cccccc;letter-spacing:0.8px;">Models</div>
<svg style="position:absolute;left:150.7px;top:1456px;" width="16" height="24" viewBox="0 0 16 24"><path d="M2.5 2 L12 12 L2.5 22" fill="none" stroke="#cccccc" stroke-width="2.4"/></svg>
<svg style="position:absolute;left:180.0px;top:1454.6px;" width="27" height="23" viewBox="0 0 27 23"><path d="M0 2 Q0 0 2 0 H11 Q13 0 13 2 V3.4 Q13.4 4.3 14.6 4.3 H24 Q26 4.3 26 6.3 V22.4 H0 Z" fill="#cccccc"/><rect x="2.1" y="2.1" width="8.8" height="1.9" rx="0.9" fill="#252526"/></svg>
<div id="t35" style="position:absolute;left:224px;top:1455.90px;font-family:'Liberation Sans', sans-serif;font-size:26px;line-height:1;font-weight:400;color:#cccccc;white-space:pre;-webkit-text-stroke:0.45px #cccccc;letter-spacing:0.853px;">ThirdParty</div>
<svg style="position:absolute;left:145.7px;top:1503px;" width="24" height="16" viewBox="0 0 24 16"><path d="M2 2.5 L12 12 L22 2.5" fill="none" stroke="#cccccc" stroke-width="2.4"/></svg>
<svg style="position:absolute;left:180.0px;top:1498.6px;" width="27" height="23" viewBox="0 0 27 23"><path d="M0 2 Q0 0 2 0 H11 Q13 0 13 2 V3.4 Q13.4 4.3 14.6 4.3 H24 Q26 4.3 26 6.3 V22.4 H0 Z" fill="#cccccc"/><rect x="2.1" y="2.1" width="8.8" height="1.9" rx="0.9" fill="#252526"/></svg>
<div id="t36" style="position:absolute;left:224px;top:1499.90px;font-family:'Liberation Sans', sans-serif;font-size:26px;line-height:1;font-weight:400;color:#cccccc;white-space:pre;-webkit-text-stroke:0.45px #cccccc;letter-spacing:0.8px;">Views</div>
<svg style="position:absolute;left:166.7px;top:1544px;" width="16" height="24" viewBox="0 0 16 24"><path d="M2.5 2 L12 12 L2.5 22" fill="none" stroke="#cccccc" stroke-width="2.4"/></svg>
<svg style="position:absolute;left:196.0px;top:1542.6px;" width="27" height="23" viewBox="0 0 27 23"><path d="M0 2 Q0 0 2 0 H11 Q13 0 13 2 V3.4 Q13.4 4.3 14.6 4.3 H24 Q26 4.3 26 6.3 V22.4 H0 Z" fill="#cccccc"/><rect x="2.1" y="2.1" width="8.8" height="1.9" rx="0.9" fill="#252526"/></svg>
<div id="t37" style="position:absolute;left:240px;top:1543.90px;font-family:'Liberation Sans', sans-serif;font-size:26px;line-height:1;font-weight:400;color:#cccccc;white-space:pre;-webkit-text-stroke:0.45px #cccccc;letter-spacing:0.8px;">Auth</div>
<svg style="position:absolute;left:166.7px;top:1588px;" width="16" height="24" viewBox="0 0 16 24"><path d="M2.5 2 L12 12 L2.5 22" fill="none" stroke="#cccccc" stroke-width="2.4"/></svg>
<svg style="position:absolute;left:196.0px;top:1586.6px;" width="27" height="23" viewBox="0 0 27 23"><path d="M0 2 Q0 0 2 0 H11 Q13 0 13 2 V3.4 Q13.4 4.3 14.6 4.3 H24 Q26 4.3 26 6.3 V22.4 H0 Z" fill="#cccccc"/><rect x="2.1" y="2.1" width="8.8" height="1.9" rx="0.9" fill="#252526"/></svg>
<div id="t38" style="position:absolute;left:240px;top:1587.90px;font-family:'Liberation Sans', sans-serif;font-size:26px;line-height:1;font-weight:400;color:#cccccc;white-space:pre;-webkit-text-stroke:0.45px #cccccc;letter-spacing:0.8px;">Batch</div>
<svg style="position:absolute;left:166.7px;top:1632px;" width="16" height="24" viewBox="0 0 16 24"><path d="M2.5 2 L12 12 L2.5 22" fill="none" stroke="#cccccc" stroke-width="2.4"/></svg>
<svg style="position:absolute;left:196.0px;top:1630.6px;" width="27" height="23" viewBox="0 0 27 23"><path d="M0 2 Q0 0 2 0 H11 Q13 0 13 2 V3.4 Q13.4 4.3 14.6 4.3 H24 Q26 4.3 26 6.3 V22.4 H0 Z" fill="#cccccc"/><rect x="2.1" y="2.1" width="8.8" height="1.9" rx="0.9" fill="#252526"/></svg>
<div id="t39" style="position:absolute;left:240px;top:1631.90px;font-family:'Liberation Sans', sans-serif;font-size:26px;line-height:1;font-weight:400;color:#cccccc;white-space:pre;-webkit-text-stroke:0.45px #cccccc;letter-spacing:0.979px;">errors</div>
<div style="position:absolute;left:96px;top:1668px;width:600px;height:2px;background:#3f3f40;"></div>
<svg style="position:absolute;left:109px;top:1679px;" width="16" height="24" viewBox="0 0 16 24"><path d="M2.5 2 L12 12 L2.5 22" fill="none" stroke="#cccccc" stroke-width="2.4"/></svg>
<div id="t40" style="position:absolute;left:137px;top:1680.30px;font-family:'Liberation Sans', sans-serif;font-size:22px;line-height:1;font-weight:700;color:#cccccc;white-space:pre;-webkit-text-stroke:0.45px #cccccc;letter-spacing:0.623px;">OUTLINE</div>
<div style="position:absolute;left:96px;top:1712px;width:600px;height:2px;background:#3f3f40;"></div>
<svg style="position:absolute;left:109px;top:1723px;" width="16" height="24" viewBox="0 0 16 24"><path d="M2.5 2 L12 12 L2.5 22" fill="none" stroke="#cccccc" stroke-width="2.4"/></svg>
<div id="t41" style="position:absolute;left:137px;top:1724.30px;font-family:'Liberation Sans', sans-serif;font-size:22px;line-height:1;font-weight:700;color:#cccccc;white-space:pre;-webkit-text-stroke:0.45px #cccccc;letter-spacing:0.647px;">TIMELINE</div>
<svg style="position:absolute;left:716px;top:80.5px;" width="30" height="22" viewBox="0 0 30 22"><g transform="scale(1.0000,1.0000)">
<path d="M8 0 C3.5 0 0 3.5 0 8.5 C0 11.5 1.5 14.5 3.5 16 L4.3 18.6 C4.3 19.4 4.0 19.8 3.6 20.2 C4.5 21.4 6.3 21.0 7.1 19.8 C7.9 18.5 7.7 16.5 7 14.8 C8 14.3 9.2 14.4 10.2 14.9 L10.2 21.7 L14.3 21.7 L14.3 16.2 C16 15.6 19 15.6 20.6 16.2 L20.6 21.7 L26.3 21.7 L26.3 15 C27.3 13.2 28.5 11.8 30 10.6 C29.2 7 27.5 3 23 1.2 C20.5 0.4 17.5 0.6 15.2 1 C13.5 0 10.5 -0.2 8 0 Z" fill="#52798e"/>
<path d="M14.6 2.6 C15.4 6 14.6 9.6 11.6 10.5 C10.1 11 8.9 10.5 8.3 9.6" fill="none" stroke="#1e1e1e" stroke-width="1.2"/>
<circle cx="3.6" cy="8.2" r="0.85" fill="#1e1e1e"/>
<path d="M2.4 13.2 L4.6 11.8" stroke="#1e1e1e" stroke-width="1.2"/>
</g></svg>
<div id="t42" style="position:absolute;left:761.5px;top:79.30px;font-family:'Liberation Sans', sans-serif;font-size:26px;line-height:1;font-weight:400;color:#e88675;white-space:pre;-webkit-text-stroke:0.45px #e88675;letter-spacing:0.835px;">2025-10-29-021525_CreateModulesTable.php</div>
<div id="t43" style="position:absolute;left:1336px;top:81.00px;font-family:'Liberation Sans', sans-serif;font-size:24px;line-height:1;font-weight:700;color:#be7c6f;white-space:pre;-webkit-text-stroke:0.45px #be7c6f;">5</div>
<svg style="position:absolute;left:1368px;top:81px;" width="20" height="20" viewBox="0 0 20 20"><circle cx="10" cy="10" r="7.8" fill="#ffffff"/></svg>
<svg style="position:absolute;left:2690px;top:76px;" width="28" height="32" viewBox="0 0 28 32"><path d="M5 4 L23 15.5 L5 27 Z" fill="none" stroke="#cccccc" stroke-width="2.6" stroke-linejoin="round"/></svg>
<svg style="position:absolute;left:2726px;top:84px;" width="20" height="14" viewBox="0 0 20 14"><path d="M2.5 3 L9.5 10 L16.5 3" fill="none" stroke="#cccccc" stroke-width="2.2"/></svg>
<svg style="position:absolute;left:2766px;top:76px;" width="34" height="32" viewBox="0 0 34 32"><rect x="5" y="4" width="24.5" height="24.5" rx="3" fill="none" stroke="#cccccc" stroke-width="2.6" stroke-linejoin="round"/><path d="M17.2 4 V28.5" fill="none" stroke="#cccccc" stroke-width="2.6" stroke-linejoin="round"/></svg>
<svg style="position:absolute;left:2818px;top:84px;" width="32" height="16" viewBox="0 0 32 16"><circle cx="6.5" cy="7" r="2.7" fill="#cccccc"/><circle cx="16.2" cy="7" r="2.7" fill="#cccccc"/><circle cx="26" cy="7" r="2.7" fill="#cccccc"/></svg>
<div id="t44" style="position:absolute;left:728.6px;top:135.50px;font-family:'Liberation Sans', sans-serif;font-size:26px;line-height:1;font-weight:400;color:#a9a9a9;white-space:pre;-webkit-text-stroke:0.45px #a9a9a9;letter-spacing:1.455px;">app</div>
<svg style="position:absolute;left:783px;top:138px;" width="14" height="22" viewBox="0 0 14 22"><path d="M2 2 L11 11 L2 20" fill="none" stroke="#a9a9a9" stroke-width="2"/></svg>
<div id="t45" style="position:absolute;left:807.3px;top:135.50px;font-family:'Liberation Sans', sans-serif;font-size:26px;line-height:1;font-weight:400;color:#a9a9a9;white-space:pre;-webkit-text-stroke:0.45px #a9a9a9;letter-spacing:0.427px;">Database</div>
<svg style="position:absolute;left:930px;top:138px;" width="14" height="22" viewBox="0 0 14 22"><path d="M2 2 L11 11 L2 20" fill="none" stroke="#a9a9a9" stroke-width="2"/></svg>
<div id="t46" style="position:absolute;left:953px;top:135.50px;font-family:'Liberation Sans', sans-serif;font-size:26px;line-height:1;font-weight:400;color:#a9a9a9;white-space:pre;-webkit-text-stroke:0.45px #a9a9a9;letter-spacing:0.929px;">Migrations</div>
<svg style="position:absolute;left:1089.5px;top:138px;" width="14" height="22" viewBox="0 0 14 22"><path d="M2 2 L11 11 L2 20" fill="none" stroke="#a9a9a9" stroke-width="2"/></svg>
<svg style="position:absolute;left:1111.7px;top:136.7px;" width="30" height="22" viewBox="0 0 30 22"><g transform="scale(1.0000,1.0000)">
<path d="M8 0 C3.5 0 0 3.5 0 8.5 C0 11.5 1.5 14.5 3.5 16 L4.3 18.6 C4.3 19.4 4.0 19.8 3.6 20.2 C4.5 21.4 6.3 21.0 7.1 19.8 C7.9 18.5 7.7 16.5 7 14.8 C8 14.3 9.2 14.4 10.2 14.9 L10.2 21.7 L14.3 21.7 L14.3 16.2 C16 15.6 19 15.6 20.6 16.2 L20.6 21.7 L26.3 21.7 L26.3 15 C27.3 13.2 28.5 11.8 30 10.6 C29.2 7 27.5 3 23 1.2 C20.5 0.4 17.5 0.6 15.2 1 C13.5 0 10.5 -0.2 8 0 Z" fill="#52798e"/>
<path d="M14.6 2.6 C15.4 6 14.6 9.6 11.6 10.5 C10.1 11 8.9 10.5 8.3 9.6" fill="none" stroke="#1e1e1e" stroke-width="1.2"/>
<circle cx="3.6" cy="8.2" r="0.85" fill="#1e1e1e"/>
<path d="M2.4 13.2 L4.6 11.8" stroke="#1e1e1e" stroke-width="1.2"/>
</g></svg>
<div id="t47" style="position:absolute;left:1157px;top:135.50px;font-family:'Liberation Sans', sans-serif;font-size:26px;line-height:1;font-weight:400;color:#a9a9a9;white-space:pre;-webkit-text-stroke:0.45px #a9a9a9;letter-spacing:0.835px;">2025-10-29-021525_CreateModulesTable.php</div>
<svg style="position:absolute;left:1729px;top:138px;" width="14" height="22" viewBox="0 0 14 22"><path d="M2 2 L11 11 L2 20" fill="none" stroke="#a9a9a9" stroke-width="2"/></svg>
<div id="t48" style="position:absolute;left:1753.6px;top:135.50px;font-family:'Liberation Sans', sans-serif;font-size:26px;line-height:1;font-weight:400;color:#a9a9a9;white-space:pre;-webkit-text-stroke:0.45px #a9a9a9;letter-spacing:0.378px;">PHP Intelephense</div>
<svg style="position:absolute;left:1976px;top:138px;" width="14" height="22" viewBox="0 0 14 22"><path d="M2 2 L11 11 L2 20" fill="none" stroke="#a9a9a9" stroke-width="2"/></svg>
<svg style="position:absolute;left:2000px;top:132px;" width="32" height="32" viewBox="0 0 32 32"><g fill="none" stroke="#e2a144" stroke-width="2.0" stroke-linejoin="round">
<path d="M2.6 10.6 L10.1 3.6 L13.2 6.8 L5.9 13.6 Z"/>
<path d="M20.8 15.6 L25.2 11.3 L28.0 13.9 L23.4 18.3 Z"/>
<path d="M20.8 25.8 L25.2 21.5 L28.0 24.1 L23.4 28.5 Z"/>
<path d="M10.1 11.3 V24.3 H21 M10.1 14.4 H21"/>
</g></svg>
<div id="t49" style="position:absolute;left:2037.8px;top:135.50px;font-family:'Liberation Sans', sans-serif;font-size:26px;line-height:1;font-weight:400;color:#a9a9a9;white-space:pre;-webkit-text-stroke:0.45px #a9a9a9;letter-spacing:0.531px;">CreateModulesTable</div>
<svg style="position:absolute;left:2293px;top:138px;" width="14" height="22" viewBox="0 0 14 22"><path d="M2 2 L11 11 L2 20" fill="none" stroke="#a9a9a9" stroke-width="2"/></svg>
<svg style="position:absolute;left:2318px;top:132.8px;" width="30" height="30" viewBox="0 0 30 30"><g fill="none" stroke="#aa82d2" stroke-width="2.4" stroke-linejoin="round">
<path d="M14 2.5 L25.5 8.5 V21.5 L14 27.5 L2.5 21.5 V8.5 Z"/>
<path d="M2.5 8.5 L14 14.5 L25.5 8.5 M14 14.5 V27.5"/>
</g></svg>
<div id="t50" style="position:absolute;left:2354.8px;top:135.50px;font-family:'Liberation Sans', sans-serif;font-size:26px;line-height:1;font-weight:400;color:#a9a9a9;white-space:pre;-webkit-text-stroke:0.45px #a9a9a9;letter-spacing:2.778px;">up</div>
<div style="position:absolute;left:842px;top:804px;width:1782px;height:42px;box-sizing:border-box;border:4px solid #282828;border-right:none;border-left-width:2px"></div>
<div style="position:absolute;left:840.0px;top:258px;width:2px;height:1008px;background:#404040;"></div>
<div style="position:absolute;left:907.2px;top:258px;width:2px;height:1008px;background:#404040;"></div>
<div style="position:absolute;left:974.4px;top:258px;width:2px;height:1008px;background:#404040;"></div>
<div style="position:absolute;left:1041.6px;top:258px;width:2px;height:126px;background:#404040;"></div>
<div style="position:absolute;left:1041.6px;top:468px;width:2px;height:168px;background:#404040;"></div>
<div style="position:absolute;left:1041.6px;top:720px;width:2px;height:126px;background:#404040;"></div>
<div style="position:absolute;left:1041.6px;top:888px;width:2px;height:42px;background:#404040;"></div>
<div style="position:absolute;left:1041.6px;top:972px;width:2px;height:84px;background:#404040;"></div>
<div style="position:absolute;left:1041.6px;top:1140px;width:2px;height:84px;background:#404040;"></div>
<div style="position:absolute;left:840.0px;top:1266px;width:2px;height:26px;background:#404040;"></div>
<div style="position:absolute;left:907.2px;top:1266px;width:2px;height:26px;background:#404040;"></div>
<div style="position:absolute;left:1041.6px;top:720px;width:2px;height:126px;background:#8c8c8c;"></div>
<div style="position:absolute;left:1210.0px;top:678px;width:17px;height:42px;background:;box-sizing:border-box;border:2px solid #888888;background:#20261f;"></div>
<div style="position:absolute;left:1042.0px;top:846px;width:17px;height:42px;background:;box-sizing:border-box;border:2px solid #888888;background:#20261f;"></div>
<div style="position:absolute;left:686px;top:258px;width:101px;height:42px;text-align:right;font-family:'Liberation Mono', monospace;font-size:29.5px;letter-spacing:-0.9px;line-height:42px;color:#858585;-webkit-text-stroke:0.35px #858585"><div style="position:relative;top:1.7px">14</div></div>
<div style="position:absolute;left:1108.60px;top:258px;height:42px;font-family:'Liberation Mono', monospace;font-size:29.5px;letter-spacing:-0.9px;line-height:42px;white-space:pre;color:#d4d4d4;-webkit-text-stroke:0.35px currentColor"><div style="position:relative;top:1.7px;height:42px"><span style="color:#c5947c">&#x27;constraint&#x27;</span><span style="color:#d4d4d4"> </span><svg width="33.6" height="42" viewBox="0 0 33.6 42" style="vertical-align:top"><path d="M2.4 16.6 H25 M2.4 21.9 H25" stroke="#d4d4d4" stroke-width="3"/><path d="M20 10.8 L28.6 19.25 L20 27.7" fill="none" stroke="#d4d4d4" stroke-width="3"/></svg><span style="color:#d4d4d4"> </span><span style="color:#bacdab">11</span><span style="color:#d4d4d4">,</span></div></div>
<div style="position:absolute;left:686px;top:300px;width:101px;height:42px;text-align:right;font-family:'Liberation Mono', monospace;font-size:29.5px;letter-spacing:-0.9px;line-height:42px;color:#858585;-webkit-text-stroke:0.35px #858585"><div style="position:relative;top:1.7px">15</div></div>
<div style="position:absolute;left:1108.60px;top:300px;height:42px;font-family:'Liberation Mono', monospace;font-size:29.5px;letter-spacing:-0.9px;line-height:42px;white-space:pre;color:#d4d4d4;-webkit-text-stroke:0.35px currentColor"><div style="position:relative;top:1.7px;height:42px"><span style="color:#c5947c">&#x27;unsigned&#x27;</span><span style="color:#d4d4d4"> </span><svg width="33.6" height="42" viewBox="0 0 33.6 42" style="vertical-align:top"><path d="M2.4 16.6 H25 M2.4 21.9 H25" stroke="#d4d4d4" stroke-width="3"/><path d="M20 10.8 L28.6 19.25 L20 27.7" fill="none" stroke="#d4d4d4" stroke-width="3"/></svg><span style="color:#d4d4d4"> </span><span style="color:#679ad1">true</span><span style="color:#d4d4d4">,</span></div></div>
<div style="position:absolute;left:686px;top:342px;width:101px;height:42px;text-align:right;font-family:'Liberation Mono', monospace;font-size:29.5px;letter-spacing:-0.9px;line-height:42px;color:#858585;-webkit-text-stroke:0.35px #858585"><div style="position:relative;top:1.7px">16</div></div>
<div style="position:absolute;left:1108.60px;top:342px;height:42px;font-family:'Liberation Mono', monospace;font-size:29.5px;letter-spacing:-0.9px;line-height:42px;white-space:pre;color:#d4d4d4;-webkit-text-stroke:0.35px currentColor"><div style="position:relative;top:1.7px;height:42px"><span style="color:#c5947c">&#x27;auto_increment&#x27;</span><span style="color:#d4d4d4"> </span><svg width="33.6" height="42" viewBox="0 0 33.6 42" style="vertical-align:top"><path d="M2.4 16.6 H25 M2.4 21.9 H25" stroke="#d4d4d4" stroke-width="3"/><path d="M20 10.8 L28.6 19.25 L20 27.7" fill="none" stroke="#d4d4d4" stroke-width="3"/></svg><span style="color:#d4d4d4"> </span><span style="color:#679ad1">true</span><span style="color:#d4d4d4">,</span></div></div>
<div style="position:absolute;left:686px;top:384px;width:101px;height:42px;text-align:right;font-family:'Liberation Mono', monospace;font-size:29.5px;letter-spacing:-0.9px;line-height:42px;color:#858585;-webkit-text-stroke:0.35px #858585"><div style="position:relative;top:1.7px">17</div></div>
<div style="position:absolute;left:1041.40px;top:384px;height:42px;font-family:'Liberation Mono', monospace;font-size:29.5px;letter-spacing:-0.9px;line-height:42px;white-space:pre;color:#d4d4d4;-webkit-text-stroke:0.35px currentColor"><div style="position:relative;top:1.7px;height:42px"><span style="color:#cc76d1">]</span><span style="color:#d4d4d4">,</span></div></div>
<div style="position:absolute;left:686px;top:426px;width:101px;height:42px;text-align:right;font-family:'Liberation Mono', monospace;font-size:29.5px;letter-spacing:-0.9px;line-height:42px;color:#858585;-webkit-text-stroke:0.35px #858585"><div style="position:relative;top:1.7px">18</div></div>
<div style="position:absolute;left:1041.40px;top:426px;height:42px;font-family:'Liberation Mono', monospace;font-size:29.5px;letter-spacing:-0.9px;line-height:42px;white-space:pre;color:#d4d4d4;-webkit-text-stroke:0.35px currentColor"><div style="position:relative;top:1.7px;height:42px"><span style="color:#c5947c">&#x27;course_id&#x27;</span><span style="color:#d4d4d4"> </span><svg width="33.6" height="42" viewBox="0 0 33.6 42" style="vertical-align:top"><path d="M2.4 16.6 H25 M2.4 21.9 H25" stroke="#d4d4d4" stroke-width="3"/><path d="M20 10.8 L28.6 19.25 L20 27.7" fill="none" stroke="#d4d4d4" stroke-width="3"/></svg><span style="color:#d4d4d4"> </span><span style="color:#cc76d1">[</span></div></div>
<div style="position:absolute;left:686px;top:468px;width:101px;height:42px;text-align:right;font-family:'Liberation Mono', monospace;font-size:29.5px;letter-spacing:-0.9px;line-height:42px;color:#858585;-webkit-text-stroke:0.35px #858585"><div style="position:relative;top:1.7px">19</div></div>
<div style="position:absolute;left:1108.60px;top:468px;height:42px;font-family:'Liberation Mono', monospace;font-size:29.5px;letter-spacing:-0.9px;line-height:42px;white-space:pre;color:#d4d4d4;-webkit-text-stroke:0.35px currentColor"><div style="position:relative;top:1.7px;height:42px"><span style="color:#c5947c">&#x27;type&#x27;</span><span style="color:#d4d4d4"> </span><svg width="33.6" height="42" viewBox="0 0 33.6 42" style="vertical-align:top"><path d="M2.4 16.6 H25 M2.4 21.9 H25" stroke="#d4d4d4" stroke-width="3"/><path d="M20 10.8 L28.6 19.25 L20 27.7" fill="none" stroke="#d4d4d4" stroke-width="3"/></svg><span style="color:#d4d4d4"> </span><span style="color:#c5947c">&#x27;INT&#x27;</span><span style="color:#d4d4d4">,</span></div></div>
<div style="position:absolute;left:686px;top:510px;width:101px;height:42px;text-align:right;font-family:'Liberation Mono', monospace;font-size:29.5px;letter-spacing:-0.9px;line-height:42px;color:#858585;-webkit-text-stroke:0.35px #858585"><div style="position:relative;top:1.7px">20</div></div>
<div style="position:absolute;left:1108.60px;top:510px;height:42px;font-family:'Liberation Mono', monospace;font-size:29.5px;letter-spacing:-0.9px;line-height:42px;white-space:pre;color:#d4d4d4;-webkit-text-stroke:0.35px currentColor"><div style="position:relative;top:1.7px;height:42px"><span style="color:#c5947c">&#x27;constraint&#x27;</span><span style="color:#d4d4d4"> </span><svg width="33.6" height="42" viewBox="0 0 33.6 42" style="vertical-align:top"><path d="M2.4 16.6 H25 M2.4 21.9 H25" stroke="#d4d4d4" stroke-width="3"/><path d="M20 10.8 L28.6 19.25 L20 27.7" fill="none" stroke="#d4d4d4" stroke-width="3"/></svg><span style="color:#d4d4d4"> </span><span style="color:#bacdab">11</span><span style="color:#d4d4d4">,</span></div></div>
<div style="position:absolute;left:686px;top:552px;width:101px;height:42px;text-align:right;font-family:'Liberation Mono', monospace;font-size:29.5px;letter-spacing:-0.9px;line-height:42px;color:#858585;-webkit-text-stroke:0.35px #858585"><div style="position:relative;top:1.7px">21</div></div>
<div style="position:absolute;left:1108.60px;top:552px;height:42px;font-family:'Liberation Mono', monospace;font-size:29.5px;letter-spacing:-0.9px;line-height:42px;white-space:pre;color:#d4d4d4;-webkit-text-stroke:0.35px currentColor"><div style="position:relative;top:1.7px;height:42px"><span style="color:#c5947c">&#x27;unsigned&#x27;</span><span style="color:#d4d4d4"> </span><svg width="33.6" height="42" viewBox="0 0 33.6 42" style="vertical-align:top"><path d="M2.4 16.6 H25 M2.4 21.9 H25" stroke="#d4d4d4" stroke-width="3"/><path d="M20 10.8 L28.6 19.25 L20 27.7" fill="none" stroke="#d4d4d4" stroke-width="3"/></svg><span style="color:#d4d4d4"> </span><span style="color:#679ad1">true</span><span style="color:#d4d4d4">,</span></div></div>
<div style="position:absolute;left:686px;top:594px;width:101px;height:42px;text-align:right;font-family:'Liberation Mono', monospace;font-size:29.5px;letter-spacing:-0.9px;line-height:42px;color:#858585;-webkit-text-stroke:0.35px #858585"><div style="position:relative;top:1.7px">22</div></div>
<div style="position:absolute;left:1108.60px;top:594px;height:42px;font-family:'Liberation Mono', monospace;font-size:29.5px;letter-spacing:-0.9px;line-height:42px;white-space:pre;color:#d4d4d4;-webkit-text-stroke:0.35px currentColor"><div style="position:relative;top:1.7px;height:42px"><span style="color:#c5947c">&#x27;null&#x27;</span><span style="color:#d4d4d4"> </span><svg width="33.6" height="42" viewBox="0 0 33.6 42" style="vertical-align:top"><path d="M2.4 16.6 H25 M2.4 21.9 H25" stroke="#d4d4d4" stroke-width="3"/><path d="M20 10.8 L28.6 19.25 L20 27.7" fill="none" stroke="#d4d4d4" stroke-width="3"/></svg><span style="color:#d4d4d4"> </span><span style="color:#679ad1">false</span></div></div>
<div style="position:absolute;left:686px;top:636px;width:101px;height:42px;text-align:right;font-family:'Liberation Mono', monospace;font-size:29.5px;letter-spacing:-0.9px;line-height:42px;color:#858585;-webkit-text-stroke:0.35px #858585"><div style="position:relative;top:1.7px">23</div></div>
<div style="position:absolute;left:1041.40px;top:636px;height:42px;font-family:'Liberation Mono', monospace;font-size:29.5px;letter-spacing:-0.9px;line-height:42px;white-space:pre;color:#d4d4d4;-webkit-text-stroke:0.35px currentColor"><div style="position:relative;top:1.7px;height:42px"><span style="color:#cc76d1">]</span><span style="color:#d4d4d4">,</span></div></div>
<div style="position:absolute;left:686px;top:678px;width:101px;height:42px;text-align:right;font-family:'Liberation Mono', monospace;font-size:29.5px;letter-spacing:-0.9px;line-height:42px;color:#858585;-webkit-text-stroke:0.35px #858585"><div style="position:relative;top:1.7px">24</div></div>
<div style="position:absolute;left:1041.40px;top:678px;height:42px;font-family:'Liberation Mono', monospace;font-size:29.5px;letter-spacing:-0.9px;line-height:42px;white-space:pre;color:#d4d4d4;-webkit-text-stroke:0.35px currentColor"><div style="position:relative;top:1.7px;height:42px"><span style="color:#c5947c">&#x27;name&#x27;</span><span style="color:#d4d4d4"> </span><svg width="33.6" height="42" viewBox="0 0 33.6 42" style="vertical-align:top"><path d="M2.4 16.6 H25 M2.4 21.9 H25" stroke="#d4d4d4" stroke-width="3"/><path d="M20 10.8 L28.6 19.25 L20 27.7" fill="none" stroke="#d4d4d4" stroke-width="3"/></svg><span style="color:#d4d4d4"> </span><span style="color:#cc76d1">[</span></div></div>
<div style="position:absolute;left:686px;top:720px;width:101px;height:42px;text-align:right;font-family:'Liberation Mono', monospace;font-size:29.5px;letter-spacing:-0.9px;line-height:42px;color:#858585;-webkit-text-stroke:0.35px #858585"><div style="position:relative;top:1.7px">25</div></div>
<div style="position:absolute;left:1108.60px;top:720px;height:42px;font-family:'Liberation Mono', monospace;font-size:29.5px;letter-spacing:-0.9px;line-height:42px;white-space:pre;color:#d4d4d4;-webkit-text-stroke:0.35px currentColor"><div style="position:relative;top:1.7px;height:42px"><span style="color:#c5947c">&#x27;type&#x27;</span><span style="color:#d4d4d4"> </span><svg width="33.6" height="42" viewBox="0 0 33.6 42" style="vertical-align:top"><path d="M2.4 16.6 H25 M2.4 21.9 H25" stroke="#d4d4d4" stroke-width="3"/><path d="M20 10.8 L28.6 19.25 L20 27.7" fill="none" stroke="#d4d4d4" stroke-width="3"/></svg><span style="color:#d4d4d4"> </span><span style="color:#c5947c">&#x27;VARCHAR&#x27;</span><span style="color:#d4d4d4">,</span></div></div>
<div style="position:absolute;left:686px;top:762px;width:101px;height:42px;text-align:right;font-family:'Liberation Mono', monospace;font-size:29.5px;letter-spacing:-0.9px;line-height:42px;color:#858585;-webkit-text-stroke:0.35px #858585"><div style="position:relative;top:1.7px">26</div></div>
<div style="position:absolute;left:1108.60px;top:762px;height:42px;font-family:'Liberation Mono', monospace;font-size:29.5px;letter-spacing:-0.9px;line-height:42px;white-space:pre;color:#d4d4d4;-webkit-text-stroke:0.35px currentColor"><div style="position:relative;top:1.7px;height:42px"><span style="color:#c5947c">&#x27;constraint&#x27;</span><span style="color:#d4d4d4"> </span><svg width="33.6" height="42" viewBox="0 0 33.6 42" style="vertical-align:top"><path d="M2.4 16.6 H25 M2.4 21.9 H25" stroke="#d4d4d4" stroke-width="3"/><path d="M20 10.8 L28.6 19.25 L20 27.7" fill="none" stroke="#d4d4d4" stroke-width="3"/></svg><span style="color:#d4d4d4"> </span><span style="color:#bacdab">255</span><span style="color:#d4d4d4">,</span></div></div>
<div style="position:absolute;left:686px;top:804px;width:101px;height:42px;text-align:right;font-family:'Liberation Mono', monospace;font-size:29.5px;letter-spacing:-0.9px;line-height:42px;color:#c6c6c6;-webkit-text-stroke:0.35px #c6c6c6"><div style="position:relative;top:1.7px">27</div></div>
<div style="position:absolute;left:1108.60px;top:804px;height:42px;font-family:'Liberation Mono', monospace;font-size:29.5px;letter-spacing:-0.9px;line-height:42px;white-space:pre;color:#d4d4d4;-webkit-text-stroke:0.35px currentColor"><div style="position:relative;top:1.7px;height:42px"><span style="color:#c5947c">&#x27;null&#x27;</span><span style="color:#d4d4d4"> </span><svg width="33.6" height="42" viewBox="0 0 33.6 42" style="vertical-align:top"><path d="M2.4 16.6 H25 M2.4 21.9 H25" stroke="#d4d4d4" stroke-width="3"/><path d="M20 10.8 L28.6 19.25 L20 27.7" fill="none" stroke="#d4d4d4" stroke-width="3"/></svg><span style="color:#d4d4d4"> </span><span style="color:#679ad1">false</span><span style="color:#d4d4d4">,</span></div></div>
<div style="position:absolute;left:686px;top:846px;width:101px;height:42px;text-align:right;font-family:'Liberation Mono', monospace;font-size:29.5px;letter-spacing:-0.9px;line-height:42px;color:#858585;-webkit-text-stroke:0.35px #858585"><div style="position:relative;top:1.7px">28</div></div>
<div style="position:absolute;left:1041.40px;top:846px;height:42px;font-family:'Liberation Mono', monospace;font-size:29.5px;letter-spacing:-0.9px;line-height:42px;white-space:pre;color:#d4d4d4;-webkit-text-stroke:0.35px currentColor"><div style="position:relative;top:1.7px;height:42px"><span style="color:#cc76d1">]</span><span style="color:#d4d4d4">,</span></div></div>
<div style="position:absolute;left:686px;top:888px;width:101px;height:42px;text-align:right;font-family:'Liberation Mono', monospace;font-size:29.5px;letter-spacing:-0.9px;line-height:42px;color:#858585;-webkit-text-stroke:0.35px #858585"><div style="position:relative;top:1.7px">29</div></div>
<div style="position:absolute;left:686px;top:930px;width:101px;height:42px;text-align:right;font-family:'Liberation Mono', monospace;font-size:29.5px;letter-spacing:-0.9px;line-height:42px;color:#858585;-webkit-text-stroke:0.35px #858585"><div style="position:relative;top:1.7px">30</div></div>
<div style="position:absolute;left:1041.40px;top:930px;height:42px;font-family:'Liberation Mono', monospace;font-size:29.5px;letter-spacing:-0.9px;line-height:42px;white-space:pre;color:#d4d4d4;-webkit-text-stroke:0.35px currentColor"><div style="position:relative;top:1.7px;height:42px"><span style="color:#c5947c">&#x27;disabled_at&#x27;</span><span style="color:#d4d4d4"> </span><svg width="33.6" height="42" viewBox="0 0 33.6 42" style="vertical-align:top"><path d="M2.4 16.6 H25 M2.4 21.9 H25" stroke="#d4d4d4" stroke-width="3"/><path d="M20 10.8 L28.6 19.25 L20 27.7" fill="none" stroke="#d4d4d4" stroke-width="3"/></svg><span style="color:#d4d4d4"> </span><span style="color:#cc76d1">[</span></div></div>
<div style="position:absolute;left:686px;top:972px;width:101px;height:42px;text-align:right;font-family:'Liberation Mono', monospace;font-size:29.5px;letter-spacing:-0.9px;line-height:42px;color:#858585;-webkit-text-stroke:0.35px #858585"><div style="position:relative;top:1.7px">31</div></div>
<div style="position:absolute;left:1108.60px;top:972px;height:42px;font-family:'Liberation Mono', monospace;font-size:29.5px;letter-spacing:-0.9px;line-height:42px;white-space:pre;color:#d4d4d4;-webkit-text-stroke:0.35px currentColor"><div style="position:relative;top:1.7px;height:42px"><span style="color:#c5947c">&#x27;type&#x27;</span><span style="color:#d4d4d4"> </span><svg width="33.6" height="42" viewBox="0 0 33.6 42" style="vertical-align:top"><path d="M2.4 16.6 H25 M2.4 21.9 H25" stroke="#d4d4d4" stroke-width="3"/><path d="M20 10.8 L28.6 19.25 L20 27.7" fill="none" stroke="#d4d4d4" stroke-width="3"/></svg><span style="color:#d4d4d4"> </span><span style="color:#c5947c">&#x27;DATETIME&#x27;</span><span style="color:#d4d4d4">,</span></div></div>
<div style="position:absolute;left:686px;top:1014px;width:101px;height:42px;text-align:right;font-family:'Liberation Mono', monospace;font-size:29.5px;letter-spacing:-0.9px;line-height:42px;color:#858585;-webkit-text-stroke:0.35px #858585"><div style="position:relative;top:1.7px">32</div></div>
<div style="position:absolute;left:1108.60px;top:1014px;height:42px;font-family:'Liberation Mono', monospace;font-size:29.5px;letter-spacing:-0.9px;line-height:42px;white-space:pre;color:#d4d4d4;-webkit-text-stroke:0.35px currentColor"><div style="position:relative;top:1.7px;height:42px"><span style="color:#c5947c">&#x27;null&#x27;</span><span style="color:#d4d4d4"> </span><svg width="33.6" height="42" viewBox="0 0 33.6 42" style="vertical-align:top"><path d="M2.4 16.6 H25 M2.4 21.9 H25" stroke="#d4d4d4" stroke-width="3"/><path d="M20 10.8 L28.6 19.25 L20 27.7" fill="none" stroke="#d4d4d4" stroke-width="3"/></svg><span style="color:#d4d4d4"> </span><span style="color:#679ad1">true</span><span style="color:#d4d4d4">,</span></div></div>
<div style="position:absolute;left:686px;top:1056px;width:101px;height:42px;text-align:right;font-family:'Liberation Mono', monospace;font-size:29.5px;letter-spacing:-0.9px;line-height:42px;color:#858585;-webkit-text-stroke:0.35px #858585"><div style="position:relative;top:1.7px">33</div></div>
<div style="position:absolute;left:1041.40px;top:1056px;height:42px;font-family:'Liberation Mono', monospace;font-size:29.5px;letter-spacing:-0.9px;line-height:42px;white-space:pre;color:#d4d4d4;-webkit-text-stroke:0.35px currentColor"><div style="position:relative;top:1.7px;height:42px"><span style="color:#cc76d1">]</span><span style="color:#d4d4d4">,</span></div></div>
<div style="position:absolute;left:686px;top:1098px;width:101px;height:42px;text-align:right;font-family:'Liberation Mono', monospace;font-size:29.5px;letter-spacing:-0.9px;line-height:42px;color:#858585;-webkit-text-stroke:0.35px #858585"><div style="position:relative;top:1.7px">34</div></div>
<div style="position:absolute;left:1041.40px;top:1098px;height:42px;font-family:'Liberation Mono', monospace;font-size:29.5px;letter-spacing:-0.9px;line-height:42px;white-space:pre;color:#d4d4d4;-webkit-text-stroke:0.35px currentColor"><div style="position:relative;top:1.7px;height:42px"><span style="color:#c5947c">&#x27;description&#x27;</span><span style="color:#d4d4d4"> </span><svg width="33.6" height="42" viewBox="0 0 33.6 42" style="vertical-align:top"><path d="M2.4 16.6 H25 M2.4 21.9 H25" stroke="#d4d4d4" stroke-width="3"/><path d="M20 10.8 L28.6 19.25 L20 27.7" fill="none" stroke="#d4d4d4" stroke-width="3"/></svg><span style="color:#d4d4d4"> </span><span style="color:#cc76d1">[</span></div></div>
<div style="position:absolute;left:686px;top:1140px;width:101px;height:42px;text-align:right;font-family:'Liberation Mono', monospace;font-size:29.5px;letter-spacing:-0.9px;line-height:42px;color:#858585;-webkit-text-stroke:0.35px #858585"><div style="position:relative;top:1.7px">35</div></div>
<div style="position:absolute;left:1108.60px;top:1140px;height:42px;font-family:'Liberation Mono', monospace;font-size:29.5px;letter-spacing:-0.9px;line-height:42px;white-space:pre;color:#d4d4d4;-webkit-text-stroke:0.35px currentColor"><div style="position:relative;top:1.7px;height:42px"><span style="color:#c5947c">&#x27;type&#x27;</span><span style="color:#d4d4d4"> </span><svg width="33.6" height="42" viewBox="0 0 33.6 42" style="vertical-align:top"><path d="M2.4 16.6 H25 M2.4 21.9 H25" stroke="#d4d4d4" stroke-width="3"/><path d="M20 10.8 L28.6 19.25 L20 27.7" fill="none" stroke="#d4d4d4" stroke-width="3"/></svg><span style="color:#d4d4d4"> </span><span style="color:#c5947c">&#x27;TEXT&#x27;</span><span style="color:#d4d4d4">,</span></div></div>
<div style="position:absolute;left:686px;top:1182px;width:101px;height:42px;text-align:right;font-family:'Liberation Mono', monospace;font-size:29.5px;letter-spacing:-0.9px;line-height:42px;color:#858585;-webkit-text-stroke:0.35px #858585"><div style="position:relative;top:1.7px">36</div></div>
<div style="position:absolute;left:1108.60px;top:1182px;height:42px;font-family:'Liberation Mono', monospace;font-size:29.5px;letter-spacing:-0.9px;line-height:42px;white-space:pre;color:#d4d4d4;-webkit-text-stroke:0.35px currentColor"><div style="position:relative;top:1.7px;height:42px"><span style="color:#c5947c">&#x27;null&#x27;</span><span style="color:#d4d4d4"> </span><svg width="33.6" height="42" viewBox="0 0 33.6 42" style="vertical-align:top"><path d="M2.4 16.6 H25 M2.4 21.9 H25" stroke="#d4d4d4" stroke-width="3"/><path d="M20 10.8 L28.6 19.25 L20 27.7" fill="none" stroke="#d4d4d4" stroke-width="3"/></svg><span style="color:#d4d4d4"> </span><span style="color:#679ad1">true</span><span style="color:#d4d4d4">,</span></div></div>
<div style="position:absolute;left:686px;top:1224px;width:101px;height:42px;text-align:right;font-family:'Liberation Mono', monospace;font-size:29.5px;letter-spacing:-0.9px;line-height:42px;color:#858585;-webkit-text-stroke:0.35px #858585"><div style="position:relative;top:1.7px">37</div></div>
<div style="position:absolute;left:1041.40px;top:1224px;height:42px;font-family:'Liberation Mono', monospace;font-size:29.5px;letter-spacing:-0.9px;line-height:42px;white-space:pre;color:#d4d4d4;-webkit-text-stroke:0.35px currentColor"><div style="position:relative;top:1.7px;height:42px"><span style="color:#cc76d1">]</span><span style="color:#d4d4d4">,</span></div></div>
<div style="position:absolute;left:686px;top:1266px;width:101px;height:42px;height:26px;overflow:hidden;text-align:right;font-family:'Liberation Mono', monospace;font-size:29.5px;letter-spacing:-0.9px;line-height:42px;color:#858585;-webkit-text-stroke:0.35px #858585"><div style="position:relative;top:1.7px">38</div></div>
<div style="position:absolute;left:974.20px;top:1266px;height:42px;height:26px;overflow:hidden;font-family:'Liberation Mono', monospace;font-size:29.5px;letter-spacing:-0.9px;line-height:42px;white-space:pre;color:#d4d4d4;-webkit-text-stroke:0.35px currentColor"><div style="position:relative;top:1.7px;height:42px"><span style="color:#f9d849">]</span><span style="color:#4a9df8">)</span><span style="color:#d4d4d4">;</span></div></div>
<div style="position:absolute;left:696px;top:170px;width:1928px;height:84px;background:#1e1e1e;box-shadow:0 6px 4px -2px #000;"></div>
<div style="position:absolute;left:686px;top:170px;width:101px;height:42px;text-align:right;font-family:'Liberation Mono', monospace;font-size:29.5px;letter-spacing:-0.9px;line-height:42px;color:#858585;-webkit-text-stroke:0.35px #858585"><div style="position:relative;top:1.7px">7</div></div>
<div style="position:absolute;left:686px;top:212px;width:101px;height:42px;text-align:right;font-family:'Liberation Mono', monospace;font-size:29.5px;letter-spacing:-0.9px;line-height:42px;color:#858585;-webkit-text-stroke:0.35px #858585"><div style="position:relative;top:1.7px">9</div></div>
<div style="position:absolute;left:839.80px;top:170px;height:42px;font-family:'Liberation Mono', monospace;font-size:29.5px;letter-spacing:-0.9px;line-height:42px;white-space:pre;color:#d4d4d4;-webkit-text-stroke:0.35px currentColor"><div style="position:relative;top:1.7px;height:42px"><span style="color:#679ad1">class</span><span style="color:#d4d4d4"> </span><span style="color:#71c6b1">CreateModulesTable</span><span style="color:#d4d4d4"> </span><span style="color:#679ad1">extends</span><span style="color:#d4d4d4"> </span><span style="color:#71c6b1">Migration</span></div></div>
<div style="position:absolute;left:907.00px;top:212px;height:42px;font-family:'Liberation Mono', monospace;font-size:29.5px;letter-spacing:-0.9px;line-height:42px;white-space:pre;color:#d4d4d4;-webkit-text-stroke:0.35px currentColor"><div style="position:relative;top:1.7px;height:42px"><span style="color:#679ad1">public</span><span style="color:#d4d4d4"> </span><span style="color:#679ad1">function</span><span style="color:#d4d4d4"> </span><span style="color:#dcdcaf">up</span><span style="color:#cc76d1">(</span><span style="color:#cc76d1">)</span></div></div>
<div style="position:absolute;left:2632px;top:346px;width:220px;height:4px;background:#662b25;"></div>
<div style="position:absolute;left:2632px;top:362px;width:220px;height:4px;background:#662b25;"></div>
<div style="position:absolute;left:2640px;top:346px;width:12px;height:4px;background:#d35143;"></div>
<div style="position:absolute;left:2632px;top:362px;width:3px;height:4px;background:#d35143;"></div>
<div style="position:absolute;left:2632px;top:169.5px;font-family:'Liberation Mono', monospace;font-size:3.34px;line-height:4px;white-space:pre;font-weight:700"><span style="color:#679ad1">&lt;?php</span></div>
<div style="position:absolute;left:2632px;top:177.5px;font-family:'Liberation Mono', monospace;font-size:3.34px;line-height:4px;white-space:pre;font-weight:700"><span style="color:#679ad1">namespace</span><span style="color:#d4d4d4"> </span><span style="color:#71c6b1">App\Database\Migrations</span><span style="color:#d4d4d4">;</span></div>
<div style="position:absolute;left:2632px;top:185.5px;font-family:'Liberation Mono', monospace;font-size:3.34px;line-height:4px;white-space:pre;font-weight:700"><span style="color:#679ad1">use</span><span style="color:#d4d4d4"> </span><span style="color:#d4d4d4">CodeIgniter\Database\</span><span style="color:#71c6b1">Migration</span><span style="color:#d4d4d4">;</span></div>
<div style="position:absolute;left:2632px;top:193.5px;font-family:'Liberation Mono', monospace;font-size:3.34px;line-height:4px;white-space:pre;font-weight:700"><span style="color:#679ad1">class</span><span style="color:#d4d4d4"> </span><span style="color:#71c6b1">CreateModulesTable</span><span style="color:#d4d4d4"> </span><span style="color:#679ad1">extends</span><span style="color:#d4d4d4"> </span><span style="color:#71c6b1">Migration</span></div>
<div style="position:absolute;left:2632px;top:197.5px;font-family:'Liberation Mono', monospace;font-size:3.34px;line-height:4px;white-space:pre;font-weight:700"><span style="color:#d4d4d4">{</span></div>
<div style="position:absolute;left:2640px;top:201.5px;font-family:'Liberation Mono', monospace;font-size:3.34px;line-height:4px;white-space:pre;font-weight:700"><span style="color:#679ad1">public</span><span style="color:#d4d4d4"> </span><span style="color:#679ad1">function</span><span style="color:#d4d4d4"> </span><span style="color:#dcdcaf">up</span><span style="color:#d4d4d4">()</span></div>
<div style="position:absolute;left:2640px;top:205.5px;font-family:'Liberation Mono', monospace;font-size:3.34px;line-height:4px;white-space:pre;font-weight:700"><span style="color:#d4d4d4">{</span></div>
<div style="position:absolute;left:2648px;top:209.5px;font-family:'Liberation Mono', monospace;font-size:3.34px;line-height:4px;white-space:pre;font-weight:700"><span style="color:#679ad1">$this</span><span style="color:#d4d4d4">-&gt;</span><span style="color:#d4d4d4">forge</span><span style="color:#d4d4d4">-&gt;</span><span style="color:#dcdcaf">addField</span><span style="color:#d4d4d4">([</span></div>
<div style="position:absolute;left:2656px;top:213.5px;font-family:'Liberation Mono', monospace;font-size:3.34px;line-height:4px;white-space:pre;font-weight:700"><span style="color:#c5947c">&#x27;id&#x27;</span><span style="color:#d4d4d4"> =&gt; </span><span style="color:#d4d4d4">[</span></div>
<div style="position:absolute;left:2664px;top:217.5px;font-family:'Liberation Mono', monospace;font-size:3.34px;line-height:4px;white-space:pre;font-weight:700"><span style="color:#c5947c">&#x27;type&#x27;</span><span style="color:#d4d4d4"> =&gt; </span><span style="color:#c5947c">&#x27;INT&#x27;</span><span style="color:#d4d4d4">,</span></div>
<div style="position:absolute;left:2664px;top:221.5px;font-family:'Liberation Mono', monospace;font-size:3.34px;line-height:4px;white-space:pre;font-weight:700"><span style="color:#c5947c">&#x27;constraint&#x27;</span><span style="color:#d4d4d4"> =&gt; </span><span style="color:#bacdab">11</span><span style="color:#d4d4d4">,</span></div>
<div style="position:absolute;left:2664px;top:225.5px;font-family:'Liberation Mono', monospace;font-size:3.34px;line-height:4px;white-space:pre;font-weight:700"><span style="color:#c5947c">&#x27;unsigned&#x27;</span><span style="color:#d4d4d4"> =&gt; </span><span style="color:#679ad1">true</span><span style="color:#d4d4d4">,</span></div>
<div style="position:absolute;left:2664px;top:229.5px;font-family:'Liberation Mono', monospace;font-size:3.34px;line-height:4px;white-space:pre;font-weight:700"><span style="color:#c5947c">&#x27;auto_increment&#x27;</span><span style="color:#d4d4d4"> =&gt; </span><span style="color:#679ad1">true</span><span style="color:#d4d4d4">,</span></div>
<div style="position:absolute;left:2656px;top:233.5px;font-family:'Liberation Mono', monospace;font-size:3.34px;line-height:4px;white-space:pre;font-weight:700"><span style="color:#d4d4d4">],</span></div>
<div style="position:absolute;left:2656px;top:237.5px;font-family:'Liberation Mono', monospace;font-size:3.34px;line-height:4px;white-space:pre;font-weight:700"><span style="color:#c5947c">&#x27;course_id&#x27;</span><span style="color:#d4d4d4"> =&gt; </span><span style="color:#d4d4d4">[</span></div>
<div style="position:absolute;left:2664px;top:241.5px;font-family:'Liberation Mono', monospace;font-size:3.34px;line-height:4px;white-space:pre;font-weight:700"><span style="color:#c5947c">&#x27;type&#x27;</span><span style="color:#d4d4d4"> =&gt; </span><span style="color:#c5947c">&#x27;INT&#x27;</span><span style="color:#d4d4d4">,</span></div>
<div style="position:absolute;left:2664px;top:245.5px;font-family:'Liberation Mono', monospace;font-size:3.34px;line-height:4px;white-space:pre;font-weight:700"><span style="color:#c5947c">&#x27;constraint&#x27;</span><span style="color:#d4d4d4"> =&gt; </span><span style="color:#bacdab">11</span><span style="color:#d4d4d4">,</span></div>
<div style="position:absolute;left:2664px;top:249.5px;font-family:'Liberation Mono', monospace;font-size:3.34px;line-height:4px;white-space:pre;font-weight:700"><span style="color:#c5947c">&#x27;unsigned&#x27;</span><span style="color:#d4d4d4"> =&gt; </span><span style="color:#679ad1">true</span><span style="color:#d4d4d4">,</span></div>
<div style="position:absolute;left:2664px;top:253.5px;font-family:'Liberation Mono', monospace;font-size:3.34px;line-height:4px;white-space:pre;font-weight:700"><span style="color:#c5947c">&#x27;null&#x27;</span><span style="color:#d4d4d4"> =&gt; </span><span style="color:#679ad1">false</span></div>
<div style="position:absolute;left:2656px;top:257.5px;font-family:'Liberation Mono', monospace;font-size:3.34px;line-height:4px;white-space:pre;font-weight:700"><span style="color:#d4d4d4">],</span></div>
<div style="position:absolute;left:2656px;top:261.5px;font-family:'Liberation Mono', monospace;font-size:3.34px;line-height:4px;white-space:pre;font-weight:700"><span style="color:#c5947c">&#x27;name&#x27;</span><span style="color:#d4d4d4"> =&gt; </span><span style="color:#d4d4d4">[</span></div>
<div style="position:absolute;left:2664px;top:265.5px;font-family:'Liberation Mono', monospace;font-size:3.34px;line-height:4px;white-space:pre;font-weight:700"><span style="color:#c5947c">&#x27;type&#x27;</span><span style="color:#d4d4d4"> =&gt; </span><span style="color:#c5947c">&#x27;VARCHAR&#x27;</span><span style="color:#d4d4d4">,</span></div>
<div style="position:absolute;left:2664px;top:269.5px;font-family:'Liberation Mono', monospace;font-size:3.34px;line-height:4px;white-space:pre;font-weight:700"><span style="color:#c5947c">&#x27;constraint&#x27;</span><span style="color:#d4d4d4"> =&gt; </span><span style="color:#bacdab">255</span><span style="color:#d4d4d4">,</span></div>
<div style="position:absolute;left:2664px;top:273.5px;font-family:'Liberation Mono', monospace;font-size:3.34px;line-height:4px;white-space:pre;font-weight:700"><span style="color:#c5947c">&#x27;null&#x27;</span><span style="color:#d4d4d4"> =&gt; </span><span style="color:#679ad1">false</span><span style="color:#d4d4d4">,</span></div>
<div style="position:absolute;left:2656px;top:277.5px;font-family:'Liberation Mono', monospace;font-size:3.34px;line-height:4px;white-space:pre;font-weight:700"><span style="color:#d4d4d4">],</span></div>
<div style="position:absolute;left:2656px;top:285.5px;font-family:'Liberation Mono', monospace;font-size:3.34px;line-height:4px;white-space:pre;font-weight:700"><span style="color:#c5947c">&#x27;disabled_at&#x27;</span><span style="color:#d4d4d4"> =&gt; </span><span style="color:#d4d4d4">[</span></div>
<div style="position:absolute;left:2664px;top:289.5px;font-family:'Liberation Mono', monospace;font-size:3.34px;line-height:4px;white-space:pre;font-weight:700"><span style="color:#c5947c">&#x27;type&#x27;</span><span style="color:#d4d4d4"> =&gt; </span><span style="color:#c5947c">&#x27;DATETIME&#x27;</span><span style="color:#d4d4d4">,</span></div>
<div style="position:absolute;left:2664px;top:293.5px;font-family:'Liberation Mono', monospace;font-size:3.34px;line-height:4px;white-space:pre;font-weight:700"><span style="color:#c5947c">&#x27;null&#x27;</span><span style="color:#d4d4d4"> =&gt; </span><span style="color:#679ad1">true</span><span style="color:#d4d4d4">,</span></div>
<div style="position:absolute;left:2656px;top:297.5px;font-family:'Liberation Mono', monospace;font-size:3.34px;line-height:4px;white-space:pre;font-weight:700"><span style="color:#d4d4d4">],</span></div>
<div style="position:absolute;left:2656px;top:301.5px;font-family:'Liberation Mono', monospace;font-size:3.34px;line-height:4px;white-space:pre;font-weight:700"><span style="color:#c5947c">&#x27;description&#x27;</span><span style="color:#d4d4d4"> =&gt; </span><span style="color:#d4d4d4">[</span></div>
<div style="position:absolute;left:2664px;top:305.5px;font-family:'Liberation Mono', monospace;font-size:3.34px;line-height:4px;white-space:pre;font-weight:700"><span style="color:#c5947c">&#x27;type&#x27;</span><span style="color:#d4d4d4"> =&gt; </span><span style="color:#c5947c">&#x27;TEXT&#x27;</span><span style="color:#d4d4d4">,</span></div>
<div style="position:absolute;left:2664px;top:309.5px;font-family:'Liberation Mono', monospace;font-size:3.34px;line-height:4px;white-space:pre;font-weight:700"><span style="color:#c5947c">&#x27;null&#x27;</span><span style="color:#d4d4d4"> =&gt; </span><span style="color:#679ad1">true</span><span style="color:#d4d4d4">,</span></div>
<div style="position:absolute;left:2656px;top:313.5px;font-family:'Liberation Mono', monospace;font-size:3.34px;line-height:4px;white-space:pre;font-weight:700"><span style="color:#d4d4d4">],</span></div>
<div style="position:absolute;left:2648px;top:317.5px;font-family:'Liberation Mono', monospace;font-size:3.34px;line-height:4px;white-space:pre;font-weight:700"><span style="color:#d4d4d4">]);</span></div>
<div style="position:absolute;left:2648px;top:321.5px;font-family:'Liberation Mono', monospace;font-size:3.34px;line-height:4px;white-space:pre;font-weight:700"><span style="color:#679ad1">$this</span><span style="color:#d4d4d4">-&gt;</span><span style="color:#d4d4d4">forge</span><span style="color:#d4d4d4">-&gt;</span><span style="color:#dcdcaf">addKey</span><span style="color:#d4d4d4">(</span><span style="color:#c5947c">&#x27;id&#x27;</span><span style="color:#d4d4d4">, </span><span style="color:#679ad1">true</span><span style="color:#d4d4d4">);</span></div>
<div style="position:absolute;left:2648px;top:325.5px;font-family:'Liberation Mono', monospace;font-size:3.34px;line-height:4px;white-space:pre;font-weight:700"><span style="color:#679ad1">$this</span><span style="color:#d4d4d4">-&gt;</span><span style="color:#d4d4d4">forge</span><span style="color:#d4d4d4">-&gt;</span><span style="color:#dcdcaf">addForeignKey</span><span style="color:#d4d4d4">(</span><span style="color:#c5947c">&#x27;teacher_id&#x27;</span><span style="color:#d4d4d4">, </span><span style="color:#c5947c">&#x27;users&#x27;</span><span style="color:#d4d4d4">, </span><span style="color:#c5947c">&#x27;id&#x27;</span><span style="color:#d4d4d4">, </span><span style="color:#c5947c">&#x27;CASCADE&#x27;</span><span style="color:#d4d4d4">, </span><span style="color:#c5947c">&#x27;SET NULL&#x27;</span><span style="color:#d4d4d4">);</span></div>
<div style="position:absolute;left:2648px;top:329.5px;font-family:'Liberation Mono', monospace;font-size:3.34px;line-height:4px;white-space:pre;font-weight:700"><span style="color:#679ad1">$this</span><span style="color:#d4d4d4">-&gt;</span><span style="color:#d4d4d4">forge</span><span style="color:#d4d4d4">-&gt;</span><span style="color:#dcdcaf">createTable</span><span style="color:#d4d4d4">(</span><span style="color:#c5947c">&#x27;modules&#x27;</span><span style="color:#d4d4d4">);</span></div>
<div style="position:absolute;left:2640px;top:333.5px;font-family:'Liberation Mono', monospace;font-size:3.34px;line-height:4px;white-space:pre;font-weight:700"><span style="color:#d4d4d4">}</span></div>
<div style="position:absolute;left:2640px;top:337.5px;font-family:'Liberation Mono', monospace;font-size:3.34px;line-height:4px;white-space:pre;font-weight:700"><span style="color:#d4d4d4">}</span></div>
<div style="position:absolute;left:2640px;top:345.5px;font-family:'Liberation Mono', monospace;font-size:3.34px;line-height:4px;white-space:pre;font-weight:700"><span style="color:#d4d4d4">      </span><span style="color:#679ad1">function</span><span style="color:#d4d4d4"> </span><span style="color:#dcdcaf">down</span><span style="color:#d4d4d4">()</span></div>
<div style="position:absolute;left:2640px;top:349.5px;font-family:'Liberation Mono', monospace;font-size:3.34px;line-height:4px;white-space:pre;font-weight:700"><span style="color:#d4d4d4">{</span></div>
<div style="position:absolute;left:2648px;top:353.5px;font-family:'Liberation Mono', monospace;font-size:3.34px;line-height:4px;white-space:pre;font-weight:700"><span style="color:#74985d">//</span></div>
<div style="position:absolute;left:2640px;top:357.5px;font-family:'Liberation Mono', monospace;font-size:3.34px;line-height:4px;white-space:pre;font-weight:700"><span style="color:#d4d4d4">}</span></div>
<div style="position:absolute;left:2852px;top:170px;width:2px;height:1122px;background:#2f2f2f;"></div>
<div style="position:absolute;left:2852px;top:170px;width:28px;height:2px;background:#2f2f2f;"></div>
<div style="position:absolute;left:2854px;top:331px;width:26px;height:395px;background:#454545;"></div>
<div style="position:absolute;left:2854px;top:553px;width:26px;height:4px;background:#8a8a8a;"></div>
<div style="position:absolute;left:2871px;top:821.5px;width:9px;height:14.5px;background:#a7372a;"></div>
<div style="position:absolute;left:2871px;top:880.5px;width:9px;height:15px;background:#a7372a;"></div>
<div style="position:absolute;left:696px;top:1292px;width:2184px;height:2px;background:#3d3d3d;"></div>
<div id="t51" style="position:absolute;left:736.8px;top:1317.60px;font-family:'Liberation Sans', sans-serif;font-size:22px;line-height:1;font-weight:400;color:#979797;white-space:pre;-webkit-text-stroke:0.45px #979797;letter-spacing:-0.295px;">PROBLEMS</div>
<svg style="position:absolute;left:864px;top:1312px;" width="32" height="32" viewBox="0 0 32 32"><circle cx="16" cy="16" r="16" fill="#3478c6"/></svg>
<div id="t52" style="position:absolute;left:873.5px;top:1319.30px;font-family:'Liberation Sans', sans-serif;font-size:22px;line-height:1;font-weight:400;color:#ffffff;white-space:pre;-webkit-text-stroke:0.45px #ffffff;">5</div>
<div id="t53" style="position:absolute;left:941px;top:1317.60px;font-family:'Liberation Sans', sans-serif;font-size:22px;line-height:1;font-weight:400;color:#979797;white-space:pre;-webkit-text-stroke:0.45px #979797;letter-spacing:0.409px;">OUTPUT</div>
<div id="t54" style="position:absolute;left:1081.7px;top:1317.60px;font-family:'Liberation Sans', sans-serif;font-size:22px;line-height:1;font-weight:400;color:#979797;white-space:pre;-webkit-text-stroke:0.45px #979797;letter-spacing:-0.220px;">DEBUG CONSOLE</div>
<div id="t55" style="position:absolute;left:1319px;top:1317.60px;font-family:'Liberation Sans', sans-serif;font-size:22px;line-height:1;font-weight:400;color:#e7e7e7;white-space:pre;-webkit-text-stroke:0.45px #e7e7e7;letter-spacing:0.021px;">TERMINAL</div>
<div style="position:absolute;left:1314px;top:1349px;width:119px;height:2px;background:#e7e7e7;"></div>
<div id="t56" style="position:absolute;left:1478px;top:1317.60px;font-family:'Liberation Sans', sans-serif;font-size:22px;line-height:1;font-weight:400;color:#979797;white-space:pre;-webkit-text-stroke:0.45px #979797;letter-spacing:-0.173px;">PORTS</div>
<svg style="position:absolute;left:1559px;top:1312px;" width="32" height="32" viewBox="0 0 32 32"><circle cx="16" cy="16" r="16" fill="#3478c6"/></svg>
<svg style="position:absolute;left:1559px;top:1312px;" width="32" height="32" viewBox="0 0 32 32"><path d="M12.5 12.8 L17.3 9 V23.5" fill="none" stroke="#ffffff" stroke-width="2.6"/></svg>
<svg style="position:absolute;left:2608px;top:1312px;" width="34" height="32" viewBox="0 0 34 32"><path d="M17 3 V29 M4 16 H30" fill="none" stroke="#cccccc" stroke-width="2.4"/></svg>
<svg style="position:absolute;left:2648px;top:1322px;" width="20" height="14" viewBox="0 0 20 14"><path d="M2.5 3 L9.5 10 L16.5 3" fill="none" stroke="#cccccc" stroke-width="2"/></svg>
<svg style="position:absolute;left:2688px;top:1320px;" width="32" height="16" viewBox="0 0 32 16"><circle cx="5.5" cy="8.5" r="2.6" fill="#cccccc"/><circle cx="15.5" cy="8.5" r="2.6" fill="#cccccc"/><circle cx="25.5" cy="8.5" r="2.6" fill="#cccccc"/></svg>
<div style="position:absolute;left:2742px;top:1312px;width:2px;height:32px;background:#5a5a5a;"></div>
<svg style="position:absolute;left:2766px;top:1312px;" width="32" height="32" viewBox="0 0 32 32"><path d="M5 10 V5 H11 M21 5 H27 V10 M27 22 V27 H21 M11 27 H5 V22" fill="none" stroke="#cccccc" stroke-width="2.4" stroke-width="2.6"/></svg>
<svg style="position:absolute;left:2820px;top:1314px;" width="28" height="28" viewBox="0 0 28 28"><path d="M5 5 L23 23 M23 5 L5 23" fill="none" stroke="#cccccc" stroke-width="2.4" stroke-width="2.6"/></svg>
<div id="t57" style="position:absolute;left:736px;top:1411.77px;font-family:'Liberation Mono', monospace;font-size:23.33px;line-height:1;font-weight:400;color:#cccccc;white-space:pre;-webkit-text-stroke:0.45px #cccccc;">The following issues were detected in your most recent Remote - SSH session</div>
<div id="t58" style="position:absolute;left:736px;top:1443.77px;font-family:'Liberation Mono', monospace;font-size:23.33px;line-height:1;font-weight:400;color:#cccccc;white-space:pre;-webkit-text-stroke:0.45px #cccccc;">Cmd+click on an issue to continue in Copilot Chat.</div>
<div style="position:absolute;left:740px;top:1480.5px;width:1868px;height:134px;box-sizing:border-box;border:2px solid #cccccc"></div>
<div style="position:absolute;left:745px;top:1485.7px;width:1858px;height:124px;box-sizing:border-box;border:2px solid #cccccc"></div>
<div style="position:absolute;left:882.5px;top:1486px;width:2px;height:123px;background:#cccccc;"></div>
<div style="position:absolute;left:745px;top:1547.5px;width:1858px;height:2px;background:#cccccc;"></div>
<div id="t59" style="position:absolute;left:764px;top:1507.77px;font-family:'Liberation Mono', monospace;font-size:23.33px;line-height:1;font-weight:400;color:#cccccc;white-space:pre;-webkit-text-stroke:0.45px #cccccc;">Status</div>
<div id="t60" style="position:absolute;left:904px;top:1507.77px;font-family:'Liberation Mono', monospace;font-size:23.33px;line-height:1;font-weight:400;color:#cccccc;white-space:pre;-webkit-text-stroke:0.45px #cccccc;">Message</div>
<div id="t61" style="position:absolute;left:764px;top:1571.77px;font-family:'Liberation Mono', monospace;font-size:23.33px;line-height:1;font-weight:700;color:#cccccc;white-space:pre;-webkit-text-stroke:0.45px #cccccc;text-decoration:underline;text-underline-offset:5px;text-decoration-thickness:1.6px;">Timeout</div>
<div id="t62" style="position:absolute;left:904px;top:1571.77px;font-family:'Liberation Mono', monospace;font-size:23.33px;line-height:1;font-weight:400;color:#cccccc;white-space:pre;-webkit-text-stroke:0.45px #cccccc;">Error: Timeout (Connecting with SSH timed out)</div>
<div id="t63" style="position:absolute;left:736px;top:1635.77px;font-family:'Liberation Mono', monospace;font-size:23.33px;line-height:1;font-weight:400;color:#cccccc;white-space:pre;-webkit-text-stroke:0.45px #cccccc;">See verbose information in the </div>
<div id="t64" style="position:absolute;left:1170px;top:1635.77px;font-family:'Liberation Mono', monospace;font-size:23.33px;line-height:1;font-weight:700;color:#cccccc;white-space:pre;-webkit-text-stroke:0.45px #cccccc;text-decoration:underline;text-underline-offset:5px;text-decoration-thickness:1.6px;">Output Log...</div>
<div style="position:absolute;left:2612px;top:1372px;width:2px;height:384px;background:#3a3a3a;"></div>
<div style="position:absolute;left:2612px;top:1372px;width:29px;height:2px;background:#3a3a3a;"></div>
<div style="position:absolute;left:2640px;top:1362px;width:2px;height:394px;background:#3d3d3d;"></div>
<div style="position:absolute;left:2642px;top:1406px;width:238px;height:44px;background:#37373d;"></div>
<svg style="position:absolute;left:2662px;top:1366px;" width="32" height="34" viewBox="0 0 32 34"><path d="M15 2 L28 9.5 V24.5 L15 32 L2 24.5 V9.5 Z" fill="none" stroke="#cccccc" stroke-width="1.6" stroke-linejoin="round"/>
<path d="M15 32 L28 24.5 V9.5 L15 17 Z" fill="#cccccc"/>
<text x="16.5" y="27" font-family="Liberation Mono" font-size="9" fill="#1e1e1e" font-weight="700">$_</text></svg>
<div id="t65" style="position:absolute;left:2702px;top:1372.40px;font-family:'Liberation Sans', sans-serif;font-size:26px;line-height:1;font-weight:400;color:#cccccc;white-space:pre;-webkit-text-stroke:0.45px #cccccc;">php</div>
<svg style="position:absolute;left:2662px;top:1411px;" width="32" height="32" viewBox="0 0 32 32"><rect x="3" y="3" width="26.5" height="26.5" rx="2" fill="none" stroke="#cccccc" stroke-width="2.2"/>
<path d="M7.5 10 L13 15.5 L7.5 21 M14 23 H23" fill="none" stroke="#cccccc" stroke-width="2"/></svg>
<div id="t66" style="position:absolute;left:2702px;top:1415.90px;font-family:'Liberation Sans', sans-serif;font-size:26px;line-height:1;font-weight:400;color:#cccccc;white-space:pre;-webkit-text-stroke:0.45px #cccccc;letter-spacing:0.237px;">Remote - S...</div>
<div style="position:absolute;left:0px;top:1756px;width:216px;height:44px;background:#3d8060;"></div>
<svg style="position:absolute;left:22px;top:1764px;" width="24" height="28" viewBox="0 0 24 28"><path d="M4 9.3 L11.3 16.8 L4 24.3 M19.7 2.4 L12.5 9.8 L19.7 17" fill="none" stroke="#ffffff" stroke-width="2"/></svg>
<div id="t67" style="position:absolute;left:55px;top:1765.30px;font-family:'Liberation Sans', sans-serif;font-size:26px;line-height:1;font-weight:400;color:#ffffff;white-space:pre;-webkit-text-stroke:0.45px #ffffff;letter-spacing:-0.392px;">SSH: btsv01</div>
<svg style="position:absolute;left:232px;top:1765px;" width="28" height="28" viewBox="0 0 28 28"><circle cx="13" cy="13.5" r="11" fill="none" stroke="#ffffff" stroke-width="1.9"/><path d="M8.5 9 L17.5 18 M17.5 9 L8.5 18" fill="none" stroke="#ffffff" stroke-width="1.9"/></svg>
<div id="t68" style="position:absolute;left:268px;top:1765.30px;font-family:'Liberation Sans', sans-serif;font-size:26px;line-height:1;font-weight:400;color:#ffffff;white-space:pre;-webkit-text-stroke:0.45px #ffffff;">5</div>
<svg style="position:absolute;left:289px;top:1764px;" width="28" height="28" viewBox="0 0 28 28"><path d="M13.5 2.5 L25 24.5 H2 Z" fill="none" stroke="#ffffff" stroke-width="1.9" stroke-linejoin="round"/><path d="M13.5 10 V17.5 M13.5 19.5 V22" fill="none" stroke="#ffffff" stroke-width="1.9"/></svg>
<div id="t69" style="position:absolute;left:323.8px;top:1765.30px;font-family:'Liberation Sans', sans-serif;font-size:26px;line-height:1;font-weight:400;color:#ffffff;white-space:pre;-webkit-text-stroke:0.45px #ffffff;">0</div>
<svg style="position:absolute;left:372px;top:1764px;" width="28" height="28" viewBox="0 0 28 28"><circle cx="13" cy="9.5" r="2.2" fill="#ffffff"/>
<path d="M13 11 L7.5 25 M13 11 L18.5 25 M9.3 20 H16.7" fill="none" stroke="#ffffff" stroke-width="1.9"/>
<path d="M7.5 4 Q4 9.5 7.5 15 M18.5 4 Q22 9.5 18.5 15 M4 1.5 Q-1 9.5 4 17.5 M22 1.5 Q27 9.5 22 17.5" fill="none" stroke="#ffffff" stroke-width="1.9" stroke-width="1.9"/></svg>
<svg style="position:absolute;left:400px;top:1764px;" width="24" height="28" viewBox="0 0 24 28"><path d="M8.2 11.2 L14.2 6.6 V23.4" fill="none" stroke="#ffffff" stroke-width="2.8"/></svg>
<div id="t70" style="position:absolute;left:453px;top:1765.30px;font-family:'Liberation Sans', sans-serif;font-size:26px;line-height:1;font-weight:400;color:#ffffff;white-space:pre;-webkit-text-stroke:0.45px #ffffff;letter-spacing:0.047px;">-- INSERT --</div>
<div id="t71" style="position:absolute;left:1769.4px;top:1765.30px;font-family:'Liberation Sans', sans-serif;font-size:26px;line-height:1;font-weight:400;color:#ffffff;white-space:pre;-webkit-text-stroke:0.45px #ffffff;letter-spacing:-0.156px;">Ln 27, Col 33</div>
<div id="t72" style="position:absolute;left:1954.3px;top:1765.30px;font-family:'Liberation Sans', sans-serif;font-size:26px;line-height:1;font-weight:400;color:#ffffff;white-space:pre;-webkit-text-stroke:0.45px #ffffff;letter-spacing:-0.430px;">Spaces: 4</div>
<div id="t73" style="position:absolute;left:2098.5px;top:1765.30px;font-family:'Liberation Sans', sans-serif;font-size:26px;line-height:1;font-weight:400;color:#ffffff;white-space:pre;-webkit-text-stroke:0.45px #ffffff;letter-spacing:-0.293px;">UTF-8</div>
<div id="t74" style="position:absolute;left:2203.5px;top:1765.30px;font-family:'Liberation Sans', sans-serif;font-size:26px;line-height:1;font-weight:400;color:#ffffff;white-space:pre;-webkit-text-stroke:0.45px #ffffff;letter-spacing:-2.444px;">LF</div>
<div id="t75" style="position:absolute;left:2263.5px;top:1765.30px;font-family:'Liberation Sans', sans-serif;font-size:26px;line-height:1;font-weight:400;color:#ffffff;white-space:pre;-webkit-text-stroke:0.45px #ffffff;letter-spacing:0.203px;">{ }</div>
<div id="t76" style="position:absolute;left:2302px;top:1765.30px;font-family:'Liberation Sans', sans-serif;font-size:26px;line-height:1;font-weight:400;color:#ffffff;white-space:pre;-webkit-text-stroke:0.45px #ffffff;letter-spacing:-1.984px;">PHP</div>
<div style="position:absolute;left:2366px;top:1756px;width:214px;height:44px;background:#163c63;"></div>
<svg style="position:absolute;left:2383px;top:1764px;" width="34" height="30" viewBox="0 0 34 30"><path d="M4 14 Q2 3 10 3 Q14 3 16.5 6 Q19 3 23 3 Q31 3 29 14 Q32 18 32 22 Q24 28.5 16.5 28.5 Q9 28.5 1 22 Q1 18 4 14Z" fill="#ffffff"/>
<path d="M6.5 12.5 Q5.5 6 10 6 Q14.5 6 14.5 11 Q14 14 10 14 Q7 14 6.5 12.5Z M26.5 12.5 Q27.5 6 23 6 Q18.5 6 18.5 11 Q19 14 23 14 Q26 14 26.5 12.5Z" fill="#163c63"/>
<path d="M12.5 19 V23 M20.5 19 V23" stroke="#163c63" stroke-width="2.6"/></svg>
<div id="t77" style="position:absolute;left:2421.9px;top:1765.30px;font-family:'Liberation Sans', sans-serif;font-size:26px;line-height:1;font-weight:400;color:#ffffff;white-space:pre;-webkit-text-stroke:0.45px #ffffff;letter-spacing:-0.412px;">Finish Setup</div>
<svg style="position:absolute;left:2596px;top:1764px;" width="28" height="28" viewBox="0 0 28 28"><circle cx="13.5" cy="14" r="11.5" fill="none" stroke="#ffffff" stroke-width="1.9"/><path d="M5.5 22 L21.5 6" fill="none" stroke="#ffffff" stroke-width="1.9"/></svg>
<div id="t78" style="position:absolute;left:2631.5px;top:1765.30px;font-family:'Liberation Sans', sans-serif;font-size:26px;line-height:1;font-weight:400;color:#ffffff;white-space:pre;-webkit-text-stroke:0.45px #ffffff;letter-spacing:-0.536px;">Continue (NE)</div>
<svg style="position:absolute;left:2822px;top:1762px;" width="32" height="32" viewBox="0 0 32 32"><path d="M5 23 H23 L20.5 19.5 V13 Q20.5 6 14 6 Q7.5 6 7.5 13 V19.5 Z" fill="none" stroke="#ffffff" stroke-width="1.9" stroke-linejoin="round"/>
<path d="M11 26.5 Q14 29 17 26.5" fill="none" stroke="#ffffff" stroke-width="1.9"/>
<circle cx="23.5" cy="6.5" r="5" fill="#ffffff" stroke="#3478c6" stroke-width="1.5"/></svg></div></body></html>
